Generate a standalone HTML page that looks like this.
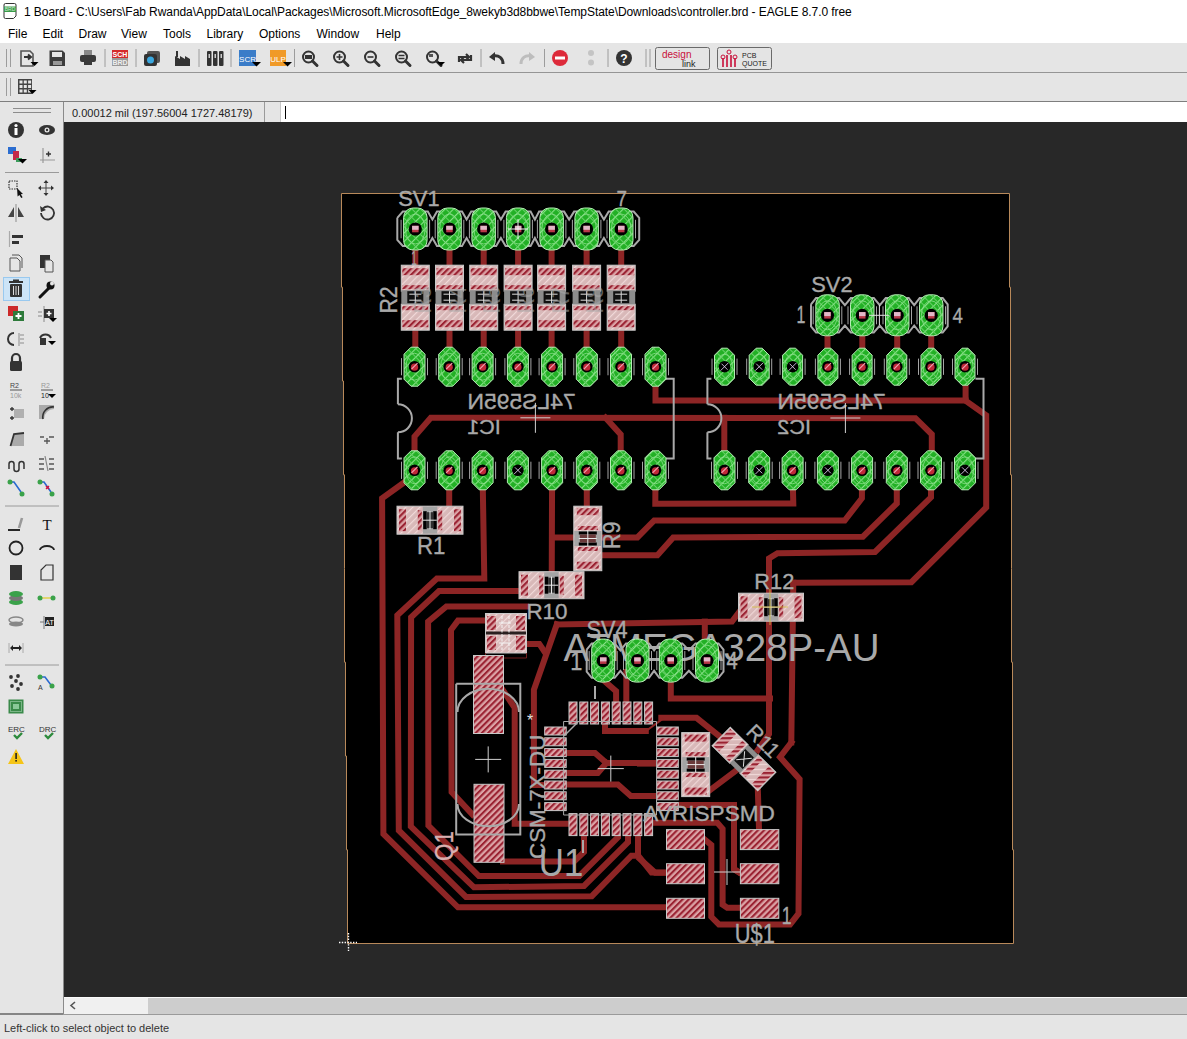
<!DOCTYPE html>
<html><head><meta charset="utf-8">
<style>
*{margin:0;padding:0;box-sizing:border-box}
html,body{width:1187px;height:1039px;overflow:hidden;background:#fff;font-family:"Liberation Sans",sans-serif;color:#000}
.a{position:absolute}
.t{position:absolute;white-space:nowrap;font-size:12px;line-height:14px}
</style></head><body>
<!-- title -->
<div class="t" style="left:24px;top:4px;font-size:12px;letter-spacing:-0.07px;color:#000;top:4.5px">1 Board - C:\Users\Fab Rwanda\AppData\Local\Packages\Microsoft.MicrosoftEdge_8wekyb3d8bbwe\TempState\Downloads\controller.brd - EAGLE 8.7.0 free</div>
<!-- menu -->
<div class="t" style="left:8px;top:27px">File</div>
<div class="t" style="left:42.5px;top:27px">Edit</div>
<div class="t" style="left:78.5px;top:27px">Draw</div>
<div class="t" style="left:121px;top:27px">View</div>
<div class="t" style="left:163px;top:27px">Tools</div>
<div class="t" style="left:206.5px;top:27px">Library</div>
<div class="t" style="left:259px;top:27px">Options</div>
<div class="t" style="left:316.5px;top:27px">Window</div>
<div class="t" style="left:376px;top:27px">Help</div>
<!-- toolbars -->
<div class="a" style="left:0;top:43px;width:1187px;height:29px;background:#e5e5e5"></div>
<div class="a" style="left:0;top:72px;width:1187px;height:1px;background:#959595"></div>
<div class="a" style="left:0;top:73px;width:1187px;height:28px;background:#e5e5e5"></div>
<div class="a" style="left:0;top:101px;width:1187px;height:1px;background:#7e7e7e"></div>
<!-- left panel -->
<div class="a" style="left:0;top:102px;width:63px;height:912px;background:#e5e5e5"></div>
<div class="a" style="left:63px;top:102px;width:1px;height:912px;background:#8a8a8a"></div>
<!-- coord bar -->
<div class="a" style="left:64px;top:102px;width:216px;height:20px;background:#e5e5e5"></div>
<div class="t" style="left:72px;top:106px;font-size:11px;color:#222">0.00012 mil (197.56004 1727.48179)</div>
<div class="a" style="left:264px;top:102px;width:1px;height:20px;background:#9a9a9a"></div>
<div class="a" style="left:280px;top:102px;width:907px;height:20px;background:#fff;border-left:1px solid #c8c8c8"></div>
<div class="a" style="left:285px;top:106px;width:1px;height:13px;background:#000"></div>
<svg width="1187" height="1039" style="position:absolute;left:0;top:0" font-family='"Liberation Sans", sans-serif'>
<defs>
 <pattern id="hatchR" patternUnits="userSpaceOnUse" width="4.4" height="4.4" patternTransform="rotate(45)">
   <rect width="4.4" height="4.4" fill="#dba2a5"/>
   <rect width="2.1" height="4.4" fill="#9a2232"/>
 </pattern>
 <pattern id="hatchP" patternUnits="userSpaceOnUse" width="5" height="5" patternTransform="rotate(45)">
   <rect width="5" height="5" fill="#d8b8b8"/>
   <rect width="1.2" height="5" fill="#f0d8d8"/>
 </pattern>
 <pattern id="hatchG" patternUnits="userSpaceOnUse" width="6" height="6" patternTransform="rotate(45)">
   <rect width="6" height="6" fill="#22b025"/>
   <rect width="1.1" height="6" fill="#88e488"/>
   <rect width="6" height="1" fill="#66d066"/>
 </pattern>
 <clipPath id="cv"><rect x="64" y="122" width="1123" height="875"/></clipPath>
</defs>
<g clip-path="url(#cv)"><rect x="64" y="122" width="1123" height="875" fill="#282828"/><polygon points="1009.5,193.5 1009.5,287.2 1010.5,287.2 1010.5,381.0 1010.5,381.0 1010.5,474.8 1011.5,474.8 1011.5,568.5 1011.5,568.5 1011.5,662.2 1012.5,662.2 1012.5,756.0 1012.5,756.0 1012.5,849.8 1013.5,849.8 1013.5,943.5 347.5,943.5 347.5,849.8 346.5,849.8 346.5,756.0 345.5,756.0 345.5,662.2 344.5,662.2 344.5,568.5 344.5,568.5 344.5,474.8 343.5,474.8 343.5,381.0 342.5,381.0 342.5,287.2 341.5,287.2 341.5,193.5" fill="#000" stroke="#b8895a" stroke-width="1"/><path d="M415.3 240.0 L415.3 270.0" fill="none" stroke="#8d2525" stroke-width="6" stroke-linejoin="miter" stroke-linecap="square"/><path d="M415.3 325.0 L415.3 356.0" fill="none" stroke="#8d2525" stroke-width="6" stroke-linejoin="miter" stroke-linecap="square"/><path d="M449.5 240.0 L449.5 270.0" fill="none" stroke="#8d2525" stroke-width="6" stroke-linejoin="miter" stroke-linecap="square"/><path d="M449.5 325.0 L449.5 356.0" fill="none" stroke="#8d2525" stroke-width="6" stroke-linejoin="miter" stroke-linecap="square"/><path d="M483.7 240.0 L483.7 270.0" fill="none" stroke="#8d2525" stroke-width="6" stroke-linejoin="miter" stroke-linecap="square"/><path d="M483.7 325.0 L483.7 356.0" fill="none" stroke="#8d2525" stroke-width="6" stroke-linejoin="miter" stroke-linecap="square"/><path d="M518.1 240.0 L518.1 270.0" fill="none" stroke="#8d2525" stroke-width="6" stroke-linejoin="miter" stroke-linecap="square"/><path d="M518.1 325.0 L518.1 356.0" fill="none" stroke="#8d2525" stroke-width="6" stroke-linejoin="miter" stroke-linecap="square"/><path d="M551.6 240.0 L551.6 270.0" fill="none" stroke="#8d2525" stroke-width="6" stroke-linejoin="miter" stroke-linecap="square"/><path d="M551.6 325.0 L551.6 356.0" fill="none" stroke="#8d2525" stroke-width="6" stroke-linejoin="miter" stroke-linecap="square"/><path d="M586.6 240.0 L586.6 270.0" fill="none" stroke="#8d2525" stroke-width="6" stroke-linejoin="miter" stroke-linecap="square"/><path d="M586.6 325.0 L586.6 356.0" fill="none" stroke="#8d2525" stroke-width="6" stroke-linejoin="miter" stroke-linecap="square"/><path d="M621.2 240.0 L621.2 270.0" fill="none" stroke="#8d2525" stroke-width="6" stroke-linejoin="miter" stroke-linecap="square"/><path d="M621.2 325.0 L621.2 356.0" fill="none" stroke="#8d2525" stroke-width="6" stroke-linejoin="miter" stroke-linecap="square"/><path d="M827.5 330.0 L827.5 352.0" fill="none" stroke="#8d2525" stroke-width="6" stroke-linejoin="miter" stroke-linecap="square"/><path d="M862.3 330.0 L862.3 352.0" fill="none" stroke="#8d2525" stroke-width="6" stroke-linejoin="miter" stroke-linecap="square"/><path d="M897.2 330.0 L897.2 352.0" fill="none" stroke="#8d2525" stroke-width="6" stroke-linejoin="miter" stroke-linecap="square"/><path d="M931.2 330.0 L931.2 352.0" fill="none" stroke="#8d2525" stroke-width="6" stroke-linejoin="miter" stroke-linecap="square"/><path d="M655.5 370.0 L655.5 400.6 L965.6 400.6" fill="none" stroke="#8d2525" stroke-width="6" stroke-linejoin="miter" stroke-linecap="square"/><path d="M965.6 370.0 L965.6 400.6 L986.2 415.2 L986.2 507.4 L911.4 582.2 L793.3 582.7" fill="none" stroke="#8d2525" stroke-width="6" stroke-linejoin="miter" stroke-linecap="square"/><path d="M414.5 460.0 L414.5 436.5 L430.8 417.8 L915.4 418.2 L931.8 434.3 L931.8 460.0" fill="none" stroke="#8d2525" stroke-width="6" stroke-linejoin="miter" stroke-linecap="square"/><path d="M605.5 417.8 L620.7 434.4 L620.7 460.0" fill="none" stroke="#8d2525" stroke-width="6" stroke-linejoin="miter" stroke-linecap="square"/><path d="M724.3 417.8 L724.3 460.0" fill="none" stroke="#8d2525" stroke-width="6" stroke-linejoin="miter" stroke-linecap="square"/><path d="M414.5 475.0 L382.1 498.4 L383.4 834.0 L458.0 907.3 L700.0 907.3" fill="none" stroke="#8d2525" stroke-width="6" stroke-linejoin="miter" stroke-linecap="square"/><path d="M449.2 475.0 L449.2 506.0" fill="none" stroke="#8d2525" stroke-width="6" stroke-linejoin="miter" stroke-linecap="square"/><path d="M482.6 475.0 L484.3 578.5 L436.9 578.5 L397.3 615.3 L398.8 830.4 L466.0 896.9 L591.8 896.2 L631.4 855.7 L638.0 855.7 L638.0 836.0" fill="none" stroke="#8d2525" stroke-width="6" stroke-linejoin="miter" stroke-linecap="square"/><path d="M638.2 855.7 L651.6 872.6 L700.0 872.6" fill="none" stroke="#8d2525" stroke-width="6" stroke-linejoin="miter" stroke-linecap="square"/><path d="M520.0 591.1 L439.0 591.1 L411.1 617.4 L410.8 826.4 L474.0 887.3 L584.0 886.0 L628.0 842.2 L628.0 830.0" fill="none" stroke="#8d2525" stroke-width="6" stroke-linejoin="miter" stroke-linecap="square"/><path d="M526.0 606.4 L446.4 606.4 L428.1 621.6 L428.4 825.6 L478.9 876.0 L579.2 876.0 L618.0 837.2 L618.0 830.0" fill="none" stroke="#8d2525" stroke-width="6" stroke-linejoin="miter" stroke-linecap="square"/><path d="M487.4 620.6 L458.0 620.6 L451.0 630.0 L451.6 792.0 L472.4 814.4" fill="none" stroke="#8d2525" stroke-width="6" stroke-linejoin="miter" stroke-linecap="square"/><path d="M552.1 475.0 L551.7 585.0" fill="none" stroke="#8d2525" stroke-width="6" stroke-linejoin="miter" stroke-linecap="square"/><path d="M552.0 537.4 L637.4 537.4 L654.2 520.5 L844.7 520.5 L861.9 498.3 L862.1 475.0" fill="none" stroke="#8d2525" stroke-width="6" stroke-linejoin="miter" stroke-linecap="square"/><path d="M601.0 555.3 L657.4 555.3 L673.2 537.4 L862.9 536.7 L896.8 503.4 L896.8 475.0" fill="none" stroke="#8d2525" stroke-width="6" stroke-linejoin="miter" stroke-linecap="square"/><path d="M586.8 475.0 L586.8 506.0" fill="none" stroke="#8d2525" stroke-width="6" stroke-linejoin="miter" stroke-linecap="square"/><path d="M655.5 475.0 L655.3 503.7 L793.3 503.4 L792.6 475.0" fill="none" stroke="#8d2525" stroke-width="6" stroke-linejoin="miter" stroke-linecap="square"/><path d="M931.0 475.0 L931.0 497.3 L875.0 551.9 L777.5 553.2 L769.0 558.5 L769.0 734.0 L757.8 750.0" fill="none" stroke="#8d2525" stroke-width="6" stroke-linejoin="miter" stroke-linecap="square"/><path d="M793.3 582.7 L791.3 742.4" fill="none" stroke="#8d2525" stroke-width="6" stroke-linejoin="miter" stroke-linecap="square"/><path d="M791.3 742.4 L780.0 757.1 L799.6 779.2 L798.5 913.7 L790.1 924.4 L718.9 924.4 L711.3 916.8 L711.3 845.0 L704.0 839.0" fill="none" stroke="#8d2525" stroke-width="6" stroke-linejoin="miter" stroke-linecap="square"/><path d="M603.2 680.0 L616.1 691.2 L616.1 705.0" fill="none" stroke="#8d2525" stroke-width="6" stroke-linejoin="miter" stroke-linecap="square"/><path d="M626.3 672.0 L626.3 705.0" fill="none" stroke="#8d2525" stroke-width="6" stroke-linejoin="miter" stroke-linecap="square"/><path d="M670.8 680.0 L670.8 698.6 L770.0 698.6" fill="none" stroke="#8d2525" stroke-width="6" stroke-linejoin="miter" stroke-linecap="square"/><path d="M557.0 624.4 L732.0 621.6 L738.5 613.0" fill="none" stroke="#8d2525" stroke-width="6" stroke-linejoin="miter" stroke-linecap="square"/><path d="M704.8 621.6 L704.8 640.0" fill="none" stroke="#8d2525" stroke-width="6" stroke-linejoin="miter" stroke-linecap="square"/><path d="M556.8 624.4 L533.9 689.7 L533.9 785.0 L546.0 785.0" fill="none" stroke="#8d2525" stroke-width="6" stroke-linejoin="miter" stroke-linecap="square"/><path d="M526.5 643.9 L539.3 643.9 L544.7 652.0" fill="none" stroke="#8d2525" stroke-width="6" stroke-linejoin="miter" stroke-linecap="square"/><path d="M502.4 689.3 L514.7 707.8 L514.7 823.7 L570.0 823.7" fill="none" stroke="#8d2525" stroke-width="6" stroke-linejoin="miter" stroke-linecap="square"/><path d="M503.0 861.6 L574.0 861.6 L584.0 852.0 L584.0 836.0" fill="none" stroke="#8d2525" stroke-width="6" stroke-linejoin="miter" stroke-linecap="square"/><path d="M566.0 753.0 L595.0 753.0 L606.4 763.0 L657.0 763.0" fill="none" stroke="#8d2525" stroke-width="6" stroke-linejoin="miter" stroke-linecap="square"/><path d="M566.0 773.0 L597.8 773.0 L606.4 763.0" fill="none" stroke="#8d2525" stroke-width="6" stroke-linejoin="miter" stroke-linecap="square"/><path d="M566.0 784.6 L617.9 784.6 L630.8 796.0 L657.0 796.0" fill="none" stroke="#8d2525" stroke-width="6" stroke-linejoin="miter" stroke-linecap="square"/><path d="M605.0 722.0 L605.0 730.9 L645.8 730.9" fill="none" stroke="#8d2525" stroke-width="6" stroke-linejoin="miter" stroke-linecap="square"/><path d="M661.3 717.8 L696.5 717.8 L721.0 737.5" fill="none" stroke="#8d2525" stroke-width="6" stroke-linejoin="miter" stroke-linecap="square"/><path d="M645 731.7 L663 718.6" stroke="#8d2525" stroke-width="2" fill="none"/><path d="M640.0 763.6 L657.0 763.6" fill="none" stroke="#8d2525" stroke-width="6" stroke-linejoin="miter" stroke-linecap="square"/><path d="M710.4 789.8 L736.6 770.2" fill="none" stroke="#8d2525" stroke-width="6" stroke-linejoin="miter" stroke-linecap="square"/><path d="M757.8 788.2 L759.0 829.0" fill="none" stroke="#8d2525" stroke-width="6" stroke-linejoin="miter" stroke-linecap="square"/><path d="M653.0 822.7 L717.3 822.7 L722.6 828.8 L722.6 904.6 L727.2 907.7 L740.0 907.7" fill="none" stroke="#8d2525" stroke-width="6" stroke-linejoin="miter" stroke-linecap="square"/><path d="M734.0 805.0 L734.0 869.0 L738.6 872.0" fill="none" stroke="#8d2525" stroke-width="6" stroke-linejoin="miter" stroke-linecap="square"/><path d="M640.0 859.0 L655.2 872.8 L666.0 872.8" fill="none" stroke="#8d2525" stroke-width="6" stroke-linejoin="miter" stroke-linecap="square"/><path d="M670.0 805.0 L734.0 805.0 L734.0 869.0 L738.6 872.0" fill="none" stroke="#8d2525" stroke-width="6" stroke-linejoin="miter" stroke-linecap="square"/><rect x="401.3" y="265.2" width="28.0" height="26.0" fill="url(#hatchP)" stroke="#c9c9c9" stroke-width="1"/><rect x="401.3" y="304.2" width="28.0" height="26.0" fill="url(#hatchP)" stroke="#c9c9c9" stroke-width="1"/><rect x="402.3" y="268.2" width="26" height="7" fill="url(#hatchR)"/><rect x="402.3" y="320.2" width="26" height="7" fill="url(#hatchR)"/><rect x="402.3" y="285.2" width="26" height="4" fill="url(#hatchR)"/><rect x="402.3" y="306.2" width="26" height="4" fill="url(#hatchR)"/><rect x="401.3" y="290.2" width="28" height="14" fill="#8c8c8c"/><rect x="407.3" y="291.2" width="16" height="12" fill="#101010"/><path d="M409.3 294.2 h12 M409.3 300.2 h12 M415.3 291.2 v12" stroke="#ddd" stroke-width="1"/><rect x="435.5" y="265.2" width="28.0" height="26.0" fill="url(#hatchP)" stroke="#c9c9c9" stroke-width="1"/><rect x="435.5" y="304.2" width="28.0" height="26.0" fill="url(#hatchP)" stroke="#c9c9c9" stroke-width="1"/><rect x="436.5" y="268.2" width="26" height="7" fill="url(#hatchR)"/><rect x="436.5" y="320.2" width="26" height="7" fill="url(#hatchR)"/><rect x="436.5" y="285.2" width="26" height="4" fill="url(#hatchR)"/><rect x="436.5" y="306.2" width="26" height="4" fill="url(#hatchR)"/><rect x="435.5" y="290.2" width="28" height="14" fill="#8c8c8c"/><rect x="441.5" y="291.2" width="16" height="12" fill="#101010"/><path d="M443.5 294.2 h12 M443.5 300.2 h12 M449.5 291.2 v12" stroke="#ddd" stroke-width="1"/><rect x="469.7" y="265.2" width="28.0" height="26.0" fill="url(#hatchP)" stroke="#c9c9c9" stroke-width="1"/><rect x="469.7" y="304.2" width="28.0" height="26.0" fill="url(#hatchP)" stroke="#c9c9c9" stroke-width="1"/><rect x="470.7" y="268.2" width="26" height="7" fill="url(#hatchR)"/><rect x="470.7" y="320.2" width="26" height="7" fill="url(#hatchR)"/><rect x="470.7" y="285.2" width="26" height="4" fill="url(#hatchR)"/><rect x="470.7" y="306.2" width="26" height="4" fill="url(#hatchR)"/><rect x="469.7" y="290.2" width="28" height="14" fill="#8c8c8c"/><rect x="475.7" y="291.2" width="16" height="12" fill="#101010"/><path d="M477.7 294.2 h12 M477.7 300.2 h12 M483.7 291.2 v12" stroke="#ddd" stroke-width="1"/><rect x="504.1" y="265.2" width="28.0" height="26.0" fill="url(#hatchP)" stroke="#c9c9c9" stroke-width="1"/><rect x="504.1" y="304.2" width="28.0" height="26.0" fill="url(#hatchP)" stroke="#c9c9c9" stroke-width="1"/><rect x="505.1" y="268.2" width="26" height="7" fill="url(#hatchR)"/><rect x="505.1" y="320.2" width="26" height="7" fill="url(#hatchR)"/><rect x="505.1" y="285.2" width="26" height="4" fill="url(#hatchR)"/><rect x="505.1" y="306.2" width="26" height="4" fill="url(#hatchR)"/><rect x="504.1" y="290.2" width="28" height="14" fill="#8c8c8c"/><rect x="510.1" y="291.2" width="16" height="12" fill="#101010"/><path d="M512.1 294.2 h12 M512.1 300.2 h12 M518.1 291.2 v12" stroke="#ddd" stroke-width="1"/><rect x="537.6" y="265.2" width="28.0" height="26.0" fill="url(#hatchP)" stroke="#c9c9c9" stroke-width="1"/><rect x="537.6" y="304.2" width="28.0" height="26.0" fill="url(#hatchP)" stroke="#c9c9c9" stroke-width="1"/><rect x="538.6" y="268.2" width="26" height="7" fill="url(#hatchR)"/><rect x="538.6" y="320.2" width="26" height="7" fill="url(#hatchR)"/><rect x="538.6" y="285.2" width="26" height="4" fill="url(#hatchR)"/><rect x="538.6" y="306.2" width="26" height="4" fill="url(#hatchR)"/><rect x="537.6" y="290.2" width="28" height="14" fill="#8c8c8c"/><rect x="543.6" y="291.2" width="16" height="12" fill="#101010"/><path d="M545.6 294.2 h12 M545.6 300.2 h12 M551.6 291.2 v12" stroke="#ddd" stroke-width="1"/><rect x="572.6" y="265.2" width="28.0" height="26.0" fill="url(#hatchP)" stroke="#c9c9c9" stroke-width="1"/><rect x="572.6" y="304.2" width="28.0" height="26.0" fill="url(#hatchP)" stroke="#c9c9c9" stroke-width="1"/><rect x="573.6" y="268.2" width="26" height="7" fill="url(#hatchR)"/><rect x="573.6" y="320.2" width="26" height="7" fill="url(#hatchR)"/><rect x="573.6" y="285.2" width="26" height="4" fill="url(#hatchR)"/><rect x="573.6" y="306.2" width="26" height="4" fill="url(#hatchR)"/><rect x="572.6" y="290.2" width="28" height="14" fill="#8c8c8c"/><rect x="578.6" y="291.2" width="16" height="12" fill="#101010"/><path d="M580.6 294.2 h12 M580.6 300.2 h12 M586.6 291.2 v12" stroke="#ddd" stroke-width="1"/><rect x="607.2" y="265.2" width="28.0" height="26.0" fill="url(#hatchP)" stroke="#c9c9c9" stroke-width="1"/><rect x="607.2" y="304.2" width="28.0" height="26.0" fill="url(#hatchP)" stroke="#c9c9c9" stroke-width="1"/><rect x="608.2" y="268.2" width="26" height="7" fill="url(#hatchR)"/><rect x="608.2" y="320.2" width="26" height="7" fill="url(#hatchR)"/><rect x="608.2" y="285.2" width="26" height="4" fill="url(#hatchR)"/><rect x="608.2" y="306.2" width="26" height="4" fill="url(#hatchR)"/><rect x="607.2" y="290.2" width="28" height="14" fill="#8c8c8c"/><rect x="613.2" y="291.2" width="16" height="12" fill="#101010"/><path d="M615.2 294.2 h12 M615.2 300.2 h12 M621.2 291.2 v12" stroke="#ddd" stroke-width="1"/><rect x="397.0" y="506.2" width="66.0" height="28.0" fill="url(#hatchP)" stroke="#c9c9c9" stroke-width="1"/><rect x="399.0" y="509.2" width="7" height="22.0" fill="url(#hatchR)"/><rect x="454.0" y="509.2" width="7" height="22.0" fill="url(#hatchR)"/><rect x="417.8" y="510.2" width="4" height="20.0" fill="url(#hatchR)"/><rect x="438.2" y="510.2" width="4" height="20.0" fill="url(#hatchR)"/><rect x="422.8" y="506.7" width="14.5" height="27.0" fill="#a4a4a4"/><rect x="423.2" y="511.2" width="3.5" height="18.0" fill="#000"/><rect x="433.2" y="511.2" width="3.5" height="18.0" fill="#000"/><rect x="426.8" y="512.2" width="6.5" height="16.0" fill="#303030"/><path d="M422.8 520.2 h14 M430.0 511.2 v18.0" stroke="#e8e8e8" stroke-width="1"/><rect x="573.8" y="506.2" width="28.0" height="64.5" fill="url(#hatchP)" stroke="#c9c9c9" stroke-width="1"/><rect x="576.8" y="508.2" width="22.0" height="7" fill="url(#hatchR)"/><rect x="576.8" y="561.7" width="22.0" height="7" fill="url(#hatchR)"/><rect x="577.8" y="526.0" width="20.0" height="4" fill="url(#hatchR)"/><rect x="577.8" y="547.0" width="20.0" height="4" fill="url(#hatchR)"/><rect x="574.3" y="531.0" width="27.0" height="15" fill="#a4a4a4"/><rect x="578.8" y="531.5" width="18.0" height="3" fill="#000"/><rect x="578.8" y="542.5" width="18.0" height="3" fill="#000"/><rect x="579.8" y="534.5" width="16.0" height="8" fill="#6a3a3a"/><path d="M587.8 531.0 v15 M578.8 538.5 h18.0" stroke="#e8e8e8" stroke-width="1"/><rect x="519.0" y="571.7" width="65.0" height="27.0" fill="url(#hatchP)" stroke="#c9c9c9" stroke-width="1"/><rect x="521.0" y="574.7" width="7" height="21.0" fill="url(#hatchR)"/><rect x="575.0" y="574.7" width="7" height="21.0" fill="url(#hatchR)"/><rect x="539.2" y="575.7" width="4" height="19.0" fill="url(#hatchR)"/><rect x="559.8" y="575.7" width="4" height="19.0" fill="url(#hatchR)"/><rect x="544.2" y="572.2" width="14.5" height="26.0" fill="#a4a4a4"/><rect x="544.8" y="576.7" width="3.5" height="17.0" fill="#000"/><rect x="554.8" y="576.7" width="3.5" height="17.0" fill="#000"/><rect x="548.2" y="577.7" width="6.5" height="15.0" fill="#303030"/><path d="M544.2 585.2 h14 M551.5 576.7 v17.0" stroke="#e8e8e8" stroke-width="1"/><rect x="738.5" y="593.2" width="65.0" height="28.0" fill="url(#hatchP)" stroke="#c9c9c9" stroke-width="1"/><rect x="740.5" y="596.2" width="7" height="22.0" fill="url(#hatchR)"/><rect x="794.5" y="596.2" width="7" height="22.0" fill="url(#hatchR)"/><rect x="758.8" y="597.2" width="4" height="20.0" fill="url(#hatchR)"/><rect x="779.2" y="597.2" width="4" height="20.0" fill="url(#hatchR)"/><rect x="763.8" y="593.7" width="14.5" height="27.0" fill="#a4a4a4"/><rect x="764.2" y="598.2" width="3.5" height="18.0" fill="#000"/><rect x="774.2" y="598.2" width="3.5" height="18.0" fill="#000"/><rect x="767.8" y="599.2" width="6.5" height="16.0" fill="#303030"/><path d="M763.8 607.2 h14 M771.0 598.2 v18.0" stroke="#e8e8e8" stroke-width="1"/><rect x="681.7" y="732.6" width="28.0" height="64.0" fill="url(#hatchP)" stroke="#c9c9c9" stroke-width="1"/><rect x="684.7" y="734.6" width="22.0" height="7" fill="url(#hatchR)"/><rect x="684.7" y="787.6" width="22.0" height="7" fill="url(#hatchR)"/><rect x="685.7" y="752.1" width="20.0" height="4" fill="url(#hatchR)"/><rect x="685.7" y="773.1" width="20.0" height="4" fill="url(#hatchR)"/><rect x="682.2" y="757.1" width="27.0" height="15" fill="#a4a4a4"/><rect x="686.7" y="757.6" width="18.0" height="3" fill="#000"/><rect x="686.7" y="768.6" width="18.0" height="3" fill="#000"/><rect x="687.7" y="760.6" width="16.0" height="8" fill="#6a3a3a"/><path d="M695.7 757.1 v15 M686.7 764.6 h18.0" stroke="#e8e8e8" stroke-width="1"/><rect x="485.5" y="613.5" width="41.0" height="39.5" fill="url(#hatchP)" stroke="#c9c9c9" stroke-width="1"/><rect x="487" y="616" width="9" height="14" fill="url(#hatchR)"/><rect x="516" y="616" width="9" height="14" fill="url(#hatchR)"/><rect x="487" y="636" width="9" height="14" fill="url(#hatchR)"/><rect x="516" y="636" width="9" height="14" fill="url(#hatchR)"/><rect x="486" y="631.5" width="40" height="3" fill="#2a2020"/><path d="M502 616 v34 M509 616 v34" stroke="#f4f4f4" stroke-width="1" stroke-dasharray="3 1.5"/><path d="M499 623 h12 M499 643 h12" stroke="#f4f4f4" stroke-width="1"/><path d="M485.5 653 v5 h41 v-5" fill="none" stroke="#8d2525" stroke-width="0.8"/><g transform="translate(744 759) rotate(44.5)"><rect x="-32" y="-13" width="25" height="26" fill="url(#hatchP)" stroke="#c9c9c9"/><rect x="7" y="-13" width="25" height="26" fill="url(#hatchP)" stroke="#c9c9c9"/><rect x="-31" y="-12" width="8" height="24" fill="url(#hatchR)"/><rect x="23" y="-12" width="8" height="24" fill="url(#hatchR)"/><rect x="-14" y="-12" width="5" height="24" fill="url(#hatchR)"/><rect x="9" y="-12" width="5" height="24" fill="url(#hatchR)"/><rect x="-7" y="-13" width="14" height="26" fill="#8c8c8c"/><rect x="-6" y="-8" width="12" height="16" fill="#101010"/><path d="M-5 -6 L5 6 M5 -6 L-5 6" stroke="#ddd" stroke-width="1"/></g><rect x="473.5" y="655.5" width="30.0" height="78.0" fill="url(#hatchR)" stroke="#c9c9c9" stroke-width="1"/><rect x="474.0" y="784.3" width="30.0" height="78.0" fill="url(#hatchR)" stroke="#c9c9c9" stroke-width="1"/><rect x="569.0" y="702.0" width="8.0" height="22.0" fill="url(#hatchR)" stroke="#c9c9c9" stroke-width="1"/><rect x="569.0" y="813.6" width="8.0" height="22.0" fill="url(#hatchR)" stroke="#c9c9c9" stroke-width="1"/><rect x="544.7" y="727.0" width="21.5" height="8.0" fill="url(#hatchR)" stroke="#c9c9c9" stroke-width="1"/><rect x="656.8" y="727.0" width="21.5" height="8.0" fill="url(#hatchR)" stroke="#c9c9c9" stroke-width="1"/><rect x="579.8" y="702.0" width="8.0" height="22.0" fill="url(#hatchR)" stroke="#c9c9c9" stroke-width="1"/><rect x="579.8" y="813.6" width="8.0" height="22.0" fill="url(#hatchR)" stroke="#c9c9c9" stroke-width="1"/><rect x="544.7" y="737.8" width="21.5" height="8.0" fill="url(#hatchR)" stroke="#c9c9c9" stroke-width="1"/><rect x="656.8" y="737.8" width="21.5" height="8.0" fill="url(#hatchR)" stroke="#c9c9c9" stroke-width="1"/><rect x="590.6" y="702.0" width="8.0" height="22.0" fill="url(#hatchR)" stroke="#c9c9c9" stroke-width="1"/><rect x="590.6" y="813.6" width="8.0" height="22.0" fill="url(#hatchR)" stroke="#c9c9c9" stroke-width="1"/><rect x="544.7" y="748.6" width="21.5" height="8.0" fill="url(#hatchR)" stroke="#c9c9c9" stroke-width="1"/><rect x="656.8" y="748.6" width="21.5" height="8.0" fill="url(#hatchR)" stroke="#c9c9c9" stroke-width="1"/><rect x="601.4" y="702.0" width="8.0" height="22.0" fill="url(#hatchR)" stroke="#c9c9c9" stroke-width="1"/><rect x="601.4" y="813.6" width="8.0" height="22.0" fill="url(#hatchR)" stroke="#c9c9c9" stroke-width="1"/><rect x="544.7" y="759.4" width="21.5" height="8.0" fill="url(#hatchR)" stroke="#c9c9c9" stroke-width="1"/><rect x="656.8" y="759.4" width="21.5" height="8.0" fill="url(#hatchR)" stroke="#c9c9c9" stroke-width="1"/><rect x="612.2" y="702.0" width="8.0" height="22.0" fill="url(#hatchR)" stroke="#c9c9c9" stroke-width="1"/><rect x="612.2" y="813.6" width="8.0" height="22.0" fill="url(#hatchR)" stroke="#c9c9c9" stroke-width="1"/><rect x="544.7" y="770.2" width="21.5" height="8.0" fill="url(#hatchR)" stroke="#c9c9c9" stroke-width="1"/><rect x="656.8" y="770.2" width="21.5" height="8.0" fill="url(#hatchR)" stroke="#c9c9c9" stroke-width="1"/><rect x="623.0" y="702.0" width="8.0" height="22.0" fill="url(#hatchR)" stroke="#c9c9c9" stroke-width="1"/><rect x="623.0" y="813.6" width="8.0" height="22.0" fill="url(#hatchR)" stroke="#c9c9c9" stroke-width="1"/><rect x="544.7" y="781.0" width="21.5" height="8.0" fill="url(#hatchR)" stroke="#c9c9c9" stroke-width="1"/><rect x="656.8" y="781.0" width="21.5" height="8.0" fill="url(#hatchR)" stroke="#c9c9c9" stroke-width="1"/><rect x="633.8" y="702.0" width="8.0" height="22.0" fill="url(#hatchR)" stroke="#c9c9c9" stroke-width="1"/><rect x="633.8" y="813.6" width="8.0" height="22.0" fill="url(#hatchR)" stroke="#c9c9c9" stroke-width="1"/><rect x="544.7" y="791.8" width="21.5" height="8.0" fill="url(#hatchR)" stroke="#c9c9c9" stroke-width="1"/><rect x="656.8" y="791.8" width="21.5" height="8.0" fill="url(#hatchR)" stroke="#c9c9c9" stroke-width="1"/><rect x="644.6" y="702.0" width="8.0" height="22.0" fill="url(#hatchR)" stroke="#c9c9c9" stroke-width="1"/><rect x="644.6" y="813.6" width="8.0" height="22.0" fill="url(#hatchR)" stroke="#c9c9c9" stroke-width="1"/><rect x="544.7" y="802.6" width="21.5" height="8.0" fill="url(#hatchR)" stroke="#c9c9c9" stroke-width="1"/><rect x="656.8" y="802.6" width="21.5" height="8.0" fill="url(#hatchR)" stroke="#c9c9c9" stroke-width="1"/><rect x="666.5" y="829.6" width="38.0" height="20.0" fill="url(#hatchR)" stroke="#c9c9c9" stroke-width="1"/><rect x="740.4" y="829.6" width="38.4" height="20.0" fill="url(#hatchR)" stroke="#c9c9c9" stroke-width="1"/><rect x="666.5" y="863.7" width="38.0" height="20.0" fill="url(#hatchR)" stroke="#c9c9c9" stroke-width="1"/><rect x="740.4" y="863.7" width="38.4" height="20.0" fill="url(#hatchR)" stroke="#c9c9c9" stroke-width="1"/><rect x="666.5" y="898.3" width="38.0" height="20.0" fill="url(#hatchR)" stroke="#c9c9c9" stroke-width="1"/><rect x="740.4" y="898.3" width="38.4" height="20.0" fill="url(#hatchR)" stroke="#c9c9c9" stroke-width="1"/><path d="M397.3 217.8 L402.8 211.6 L427.8 211.6 L432.4 219.6 L437.0 211.6 L462.0 211.6 L466.6 219.6 L471.2 211.6 L496.2 211.6 L500.9 219.6 L505.6 211.6 L530.6 211.6 L534.9 219.6 L539.1 211.6 L564.1 211.6 L569.1 219.6 L574.1 211.6 L599.1 211.6 L603.9 219.6 L608.7 211.6 L633.7 211.6 L639.2 217.8 L639.2 239.8 L633.7 246.0 L608.7 246.0 L603.9 238.0 L599.1 246.0 L574.1 246.0 L569.1 238.0 L564.1 246.0 L539.1 246.0 L534.9 238.0 L530.6 246.0 L505.6 246.0 L500.9 238.0 L496.2 246.0 L471.2 246.0 L466.6 238.0 L462.0 246.0 L437.0 246.0 L432.4 238.0 L427.8 246.0 L402.8 246.0 L397.3 239.8 L397.3 217.8" fill="none" stroke="#a9a9a9" stroke-width="2"/><path d="M811.0 304.3 L816.0 298.1 L839.0 298.1 L844.9 305.1 L850.8 298.1 L873.8 298.1 L879.8 305.1 L885.7 298.1 L908.7 298.1 L914.2 305.1 L919.7 298.1 L942.7 298.1 L947.7 304.3 L947.7 326.3 L942.7 332.5 L919.7 332.5 L914.2 325.5 L908.7 332.5 L885.7 332.5 L879.8 325.5 L873.8 332.5 L850.8 332.5 L844.9 325.5 L839.0 332.5 L816.0 332.5 L811.0 326.3 L811.0 304.3" fill="none" stroke="#a9a9a9" stroke-width="2"/><path d="M586.7 649.6 L591.7 643.4 L614.7 643.4 L620.4 650.4 L626.0 643.4 L649.0 643.4 L654.1 650.4 L659.3 643.4 L682.3 643.4 L688.9 650.4 L695.5 643.4 L718.5 643.4 L723.5 649.6 L723.5 671.6 L718.5 677.8 L695.5 677.8 L688.9 670.8 L682.3 677.8 L659.3 677.8 L654.1 670.8 L649.0 677.8 L626.0 677.8 L620.4 670.8 L614.7 677.8 L591.7 677.8 L586.7 671.6 L586.7 649.6" fill="none" stroke="#a9a9a9" stroke-width="2"/><path d="M401.9 378.8 L397.9 378.8 L397.9 404.3" fill="none" stroke="#a9a9a9" stroke-width="2"/><path d="M397.9 404.3 A 14.0 14.0 0 0 1 397.9 432.3" fill="none" stroke="#a9a9a9" stroke-width="2"/><path d="M397.9 432.3 L397.9 458.5 L401.9 458.5" fill="none" stroke="#a9a9a9" stroke-width="2"/><path d="M665.7 378.8 L673.7 378.8 L673.7 458.5 L665.7 458.5" fill="none" stroke="#a9a9a9" stroke-width="2"/><path d="M711.4 378.8 L707.4 378.8 L707.4 404.3" fill="none" stroke="#a9a9a9" stroke-width="2"/><path d="M707.4 404.3 A 14.0 14.0 0 0 1 707.4 432.3" fill="none" stroke="#a9a9a9" stroke-width="2"/><path d="M707.4 432.3 L707.4 458.5 L711.4 458.5" fill="none" stroke="#a9a9a9" stroke-width="2"/><path d="M975.5 378.8 L983.5 378.8 L983.5 458.5 L975.5 458.5" fill="none" stroke="#a9a9a9" stroke-width="2"/><path d="M456.2 683.7 L520.3 683.7 L520.3 834.5 L456.2 834.5 L456.2 683.7" fill="none" stroke="#a9a9a9" stroke-width="2"/><path d="M457.5 712 A 30.5 23 0 0 1 519 712" fill="none" stroke="#a9a9a9" stroke-width="2"/><path d="M457.5 804 A 30.5 22 0 0 0 519 804" fill="none" stroke="#a9a9a9" stroke-width="2"/><path d="M563.6 721.5 L656.5 721.5 L656.5 815.0 L563.6 815.0 L563.6 721.5" fill="none" stroke="#a9a9a9" stroke-width="1"/><path d="M564.0 736.0 L578.0 722.0" fill="none" stroke="#a9a9a9" stroke-width="1.5"/><path d="M595.0 686.0 L595.0 699.0" fill="none" stroke="#a9a9a9" stroke-width="2"/><path d="M583.0 840.0 L583.0 853.0" fill="none" stroke="#a9a9a9" stroke-width="2"/><text x="0" y="0" font-size="38.14" fill="#a9a9a9" transform="translate(563.60 660.52) scale(1.0098 1)">ATMEGA328P-AU</text><text x="0" y="0" font-size="38.68" fill="#a9a9a9" transform="translate(538.80 876.41) scale(0.9022 1)">U1</text><text x="0" y="0" font-size="22.03" fill="#a9a9a9" stroke="#a9a9a9" stroke-width="0.35" transform="translate(643.30 820.78) scale(1.0277 1)">AVRISPSMD</text><text x="0" y="0" font-size="21.61" fill="#a9a9a9" stroke="#a9a9a9" stroke-width="0.35" transform="translate(575.70 409.28) scale(-1.0614 1)">74LS595N</text><text x="0" y="0" font-size="19.63" fill="#a9a9a9" stroke="#a9a9a9" stroke-width="0.35" transform="translate(500.70 434.30) scale(-1.0933 1)">IC1</text><text x="0" y="0" font-size="21.61" fill="#a9a9a9" stroke="#a9a9a9" stroke-width="0.35" transform="translate(885.70 409.28) scale(-1.0614 1)">74LS595N</text><text x="0" y="0" font-size="19.63" fill="#a9a9a9" stroke="#a9a9a9" stroke-width="0.35" transform="translate(811.00 434.30) scale(-1.1032 1)">IC2</text><path d="M401.1 219.8 v18.5 M429.6 219.8 v18.5" stroke="#b8b8b8" stroke-width="0.9"/><rect x="403.6" y="208.0" width="23.5" height="42.0" rx="9.5" fill="url(#hatchG)" stroke="#b4eeb4" stroke-width="1"/><ellipse cx="415.3" cy="229.0" rx="9.8" ry="15.0" fill="none" stroke="#8ee08e" stroke-width="0.8"/><circle cx="415.3" cy="229.0" r="6.6" fill="#000"/><rect x="412.1" y="225.8" width="6.5" height="6.5" fill="#b83848"/><rect x="412.1" y="225.8" width="6.5" height="4.0" fill="#e0b8c8"/><path d="M435.2 219.8 v18.5 M463.8 219.8 v18.5" stroke="#b8b8b8" stroke-width="0.9"/><rect x="437.8" y="208.0" width="23.5" height="42.0" rx="9.5" fill="url(#hatchG)" stroke="#b4eeb4" stroke-width="1"/><ellipse cx="449.5" cy="229.0" rx="9.8" ry="15.0" fill="none" stroke="#8ee08e" stroke-width="0.8"/><circle cx="449.5" cy="229.0" r="6.6" fill="#000"/><rect x="446.2" y="225.8" width="6.5" height="6.5" fill="#b83848"/><rect x="446.2" y="225.8" width="6.5" height="4.0" fill="#e0b8c8"/><path d="M469.4 219.8 v18.5 M497.9 219.8 v18.5" stroke="#b8b8b8" stroke-width="0.9"/><rect x="471.9" y="208.0" width="23.5" height="42.0" rx="9.5" fill="url(#hatchG)" stroke="#b4eeb4" stroke-width="1"/><ellipse cx="483.7" cy="229.0" rx="9.8" ry="15.0" fill="none" stroke="#8ee08e" stroke-width="0.8"/><circle cx="483.7" cy="229.0" r="6.6" fill="#000"/><rect x="480.4" y="225.8" width="6.5" height="6.5" fill="#b83848"/><rect x="480.4" y="225.8" width="6.5" height="4.0" fill="#e0b8c8"/><path d="M503.9 219.8 v18.5 M532.4 219.8 v18.5" stroke="#b8b8b8" stroke-width="0.9"/><rect x="506.4" y="208.0" width="23.5" height="42.0" rx="9.5" fill="url(#hatchG)" stroke="#b4eeb4" stroke-width="1"/><ellipse cx="518.1" cy="229.0" rx="9.8" ry="15.0" fill="none" stroke="#8ee08e" stroke-width="0.8"/><circle cx="518.1" cy="229.0" r="6.6" fill="#000"/><rect x="514.9" y="225.8" width="6.5" height="6.5" fill="#b83848"/><rect x="514.9" y="225.8" width="6.5" height="4.0" fill="#e0b8c8"/><path d="M537.4 219.8 v18.5 M565.9 219.8 v18.5" stroke="#b8b8b8" stroke-width="0.9"/><rect x="539.9" y="208.0" width="23.5" height="42.0" rx="9.5" fill="url(#hatchG)" stroke="#b4eeb4" stroke-width="1"/><ellipse cx="551.6" cy="229.0" rx="9.8" ry="15.0" fill="none" stroke="#8ee08e" stroke-width="0.8"/><circle cx="551.6" cy="229.0" r="6.6" fill="#000"/><rect x="548.4" y="225.8" width="6.5" height="6.5" fill="#b83848"/><rect x="548.4" y="225.8" width="6.5" height="4.0" fill="#e0b8c8"/><path d="M572.4 219.8 v18.5 M600.9 219.8 v18.5" stroke="#b8b8b8" stroke-width="0.9"/><rect x="574.9" y="208.0" width="23.5" height="42.0" rx="9.5" fill="url(#hatchG)" stroke="#b4eeb4" stroke-width="1"/><ellipse cx="586.6" cy="229.0" rx="9.8" ry="15.0" fill="none" stroke="#8ee08e" stroke-width="0.8"/><circle cx="586.6" cy="229.0" r="6.6" fill="#000"/><rect x="583.4" y="225.8" width="6.5" height="6.5" fill="#b83848"/><rect x="583.4" y="225.8" width="6.5" height="4.0" fill="#e0b8c8"/><path d="M607.0 219.8 v18.5 M635.5 219.8 v18.5" stroke="#b8b8b8" stroke-width="0.9"/><rect x="609.5" y="208.0" width="23.5" height="42.0" rx="9.5" fill="url(#hatchG)" stroke="#b4eeb4" stroke-width="1"/><ellipse cx="621.2" cy="229.0" rx="9.8" ry="15.0" fill="none" stroke="#8ee08e" stroke-width="0.8"/><circle cx="621.2" cy="229.0" r="6.6" fill="#000"/><rect x="618.0" y="225.8" width="6.5" height="6.5" fill="#b83848"/><rect x="618.0" y="225.8" width="6.5" height="4.0" fill="#e0b8c8"/><path d="M401.5 358.1 v17.2 M427.5 358.1 v17.2" stroke="#b8b8b8" stroke-width="0.9"/><path d="M411.0 347.2 L418.0 347.2 L425.0 354.2 L425.0 379.2 L418.0 386.2 L411.0 386.2 L404.0 379.2 L404.0 354.2Z" fill="url(#hatchG)" stroke="#b4eeb4" stroke-width="1"/><ellipse cx="414.5" cy="366.7" rx="8.5" ry="13.5" fill="none" stroke="#8ee08e" stroke-width="0.8"/><circle cx="414.5" cy="366.7" r="5.8" fill="#000"/><circle cx="414.5" cy="367.2" r="3.6" fill="#c02838"/><path d="M411.5 369.2 l6 -6" stroke="#f0a0b0" stroke-width="1.2"/><path d="M401.5 461.7 v17.2 M427.5 461.7 v17.2" stroke="#b8b8b8" stroke-width="0.9"/><path d="M411.0 450.8 L418.0 450.8 L425.0 457.8 L425.0 482.8 L418.0 489.8 L411.0 489.8 L404.0 482.8 L404.0 457.8Z" fill="url(#hatchG)" stroke="#b4eeb4" stroke-width="1"/><ellipse cx="414.5" cy="470.3" rx="8.5" ry="13.5" fill="none" stroke="#8ee08e" stroke-width="0.8"/><circle cx="414.5" cy="470.3" r="5.8" fill="#000"/><circle cx="414.5" cy="470.8" r="3.6" fill="#c02838"/><path d="M411.5 472.8 l6 -6" stroke="#f0a0b0" stroke-width="1.2"/><path d="M436.2 358.1 v17.2 M462.2 358.1 v17.2" stroke="#b8b8b8" stroke-width="0.9"/><path d="M445.7 347.2 L452.7 347.2 L459.7 354.2 L459.7 379.2 L452.7 386.2 L445.7 386.2 L438.7 379.2 L438.7 354.2Z" fill="url(#hatchG)" stroke="#b4eeb4" stroke-width="1"/><ellipse cx="449.2" cy="366.7" rx="8.5" ry="13.5" fill="none" stroke="#8ee08e" stroke-width="0.8"/><circle cx="449.2" cy="366.7" r="5.8" fill="#000"/><circle cx="449.2" cy="367.2" r="3.6" fill="#c02838"/><path d="M446.2 369.2 l6 -6" stroke="#f0a0b0" stroke-width="1.2"/><path d="M436.2 461.7 v17.2 M462.2 461.7 v17.2" stroke="#b8b8b8" stroke-width="0.9"/><path d="M445.7 450.8 L452.7 450.8 L459.7 457.8 L459.7 482.8 L452.7 489.8 L445.7 489.8 L438.7 482.8 L438.7 457.8Z" fill="url(#hatchG)" stroke="#b4eeb4" stroke-width="1"/><ellipse cx="449.2" cy="470.3" rx="8.5" ry="13.5" fill="none" stroke="#8ee08e" stroke-width="0.8"/><circle cx="449.2" cy="470.3" r="5.8" fill="#000"/><circle cx="449.2" cy="470.8" r="3.6" fill="#c02838"/><path d="M446.2 472.8 l6 -6" stroke="#f0a0b0" stroke-width="1.2"/><path d="M469.6 358.1 v17.2 M495.6 358.1 v17.2" stroke="#b8b8b8" stroke-width="0.9"/><path d="M479.1 347.2 L486.1 347.2 L493.1 354.2 L493.1 379.2 L486.1 386.2 L479.1 386.2 L472.1 379.2 L472.1 354.2Z" fill="url(#hatchG)" stroke="#b4eeb4" stroke-width="1"/><ellipse cx="482.6" cy="366.7" rx="8.5" ry="13.5" fill="none" stroke="#8ee08e" stroke-width="0.8"/><circle cx="482.6" cy="366.7" r="5.8" fill="#000"/><circle cx="482.6" cy="367.2" r="3.6" fill="#c02838"/><path d="M479.6 369.2 l6 -6" stroke="#f0a0b0" stroke-width="1.2"/><path d="M469.6 461.7 v17.2 M495.6 461.7 v17.2" stroke="#b8b8b8" stroke-width="0.9"/><path d="M479.1 450.8 L486.1 450.8 L493.1 457.8 L493.1 482.8 L486.1 489.8 L479.1 489.8 L472.1 482.8 L472.1 457.8Z" fill="url(#hatchG)" stroke="#b4eeb4" stroke-width="1"/><ellipse cx="482.6" cy="470.3" rx="8.5" ry="13.5" fill="none" stroke="#8ee08e" stroke-width="0.8"/><circle cx="482.6" cy="470.3" r="5.8" fill="#000"/><circle cx="482.6" cy="470.8" r="3.6" fill="#c02838"/><path d="M479.6 472.8 l6 -6" stroke="#f0a0b0" stroke-width="1.2"/><path d="M504.9 358.1 v17.2 M530.9 358.1 v17.2" stroke="#b8b8b8" stroke-width="0.9"/><path d="M514.4 347.2 L521.4 347.2 L528.4 354.2 L528.4 379.2 L521.4 386.2 L514.4 386.2 L507.4 379.2 L507.4 354.2Z" fill="url(#hatchG)" stroke="#b4eeb4" stroke-width="1"/><ellipse cx="517.9" cy="366.7" rx="8.5" ry="13.5" fill="none" stroke="#8ee08e" stroke-width="0.8"/><circle cx="517.9" cy="366.7" r="5.8" fill="#000"/><circle cx="517.9" cy="367.2" r="3.6" fill="#c02838"/><path d="M514.9 369.2 l6 -6" stroke="#f0a0b0" stroke-width="1.2"/><path d="M504.9 461.7 v17.2 M530.9 461.7 v17.2" stroke="#b8b8b8" stroke-width="0.9"/><path d="M514.4 450.8 L521.4 450.8 L528.4 457.8 L528.4 482.8 L521.4 489.8 L514.4 489.8 L507.4 482.8 L507.4 457.8Z" fill="url(#hatchG)" stroke="#b4eeb4" stroke-width="1"/><ellipse cx="517.9" cy="470.3" rx="8.5" ry="13.5" fill="none" stroke="#8ee08e" stroke-width="0.8"/><circle cx="517.9" cy="470.3" r="5.8" fill="#000"/><path d="M513.9 474.3 l8 -8 M514.9 467.3 l6 6" stroke="#d8c8e8" stroke-width="0.9"/><path d="M539.1 358.1 v17.2 M565.1 358.1 v17.2" stroke="#b8b8b8" stroke-width="0.9"/><path d="M548.6 347.2 L555.6 347.2 L562.6 354.2 L562.6 379.2 L555.6 386.2 L548.6 386.2 L541.6 379.2 L541.6 354.2Z" fill="url(#hatchG)" stroke="#b4eeb4" stroke-width="1"/><ellipse cx="552.1" cy="366.7" rx="8.5" ry="13.5" fill="none" stroke="#8ee08e" stroke-width="0.8"/><circle cx="552.1" cy="366.7" r="5.8" fill="#000"/><circle cx="552.1" cy="367.2" r="3.6" fill="#c02838"/><path d="M549.1 369.2 l6 -6" stroke="#f0a0b0" stroke-width="1.2"/><path d="M539.1 461.7 v17.2 M565.1 461.7 v17.2" stroke="#b8b8b8" stroke-width="0.9"/><path d="M548.6 450.8 L555.6 450.8 L562.6 457.8 L562.6 482.8 L555.6 489.8 L548.6 489.8 L541.6 482.8 L541.6 457.8Z" fill="url(#hatchG)" stroke="#b4eeb4" stroke-width="1"/><ellipse cx="552.1" cy="470.3" rx="8.5" ry="13.5" fill="none" stroke="#8ee08e" stroke-width="0.8"/><circle cx="552.1" cy="470.3" r="5.8" fill="#000"/><circle cx="552.1" cy="470.8" r="3.6" fill="#c02838"/><path d="M549.1 472.8 l6 -6" stroke="#f0a0b0" stroke-width="1.2"/><path d="M573.8 358.1 v17.2 M599.8 358.1 v17.2" stroke="#b8b8b8" stroke-width="0.9"/><path d="M583.3 347.2 L590.3 347.2 L597.3 354.2 L597.3 379.2 L590.3 386.2 L583.3 386.2 L576.3 379.2 L576.3 354.2Z" fill="url(#hatchG)" stroke="#b4eeb4" stroke-width="1"/><ellipse cx="586.8" cy="366.7" rx="8.5" ry="13.5" fill="none" stroke="#8ee08e" stroke-width="0.8"/><circle cx="586.8" cy="366.7" r="5.8" fill="#000"/><circle cx="586.8" cy="367.2" r="3.6" fill="#c02838"/><path d="M583.8 369.2 l6 -6" stroke="#f0a0b0" stroke-width="1.2"/><path d="M573.8 461.7 v17.2 M599.8 461.7 v17.2" stroke="#b8b8b8" stroke-width="0.9"/><path d="M583.3 450.8 L590.3 450.8 L597.3 457.8 L597.3 482.8 L590.3 489.8 L583.3 489.8 L576.3 482.8 L576.3 457.8Z" fill="url(#hatchG)" stroke="#b4eeb4" stroke-width="1"/><ellipse cx="586.8" cy="470.3" rx="8.5" ry="13.5" fill="none" stroke="#8ee08e" stroke-width="0.8"/><circle cx="586.8" cy="470.3" r="5.8" fill="#000"/><circle cx="586.8" cy="470.8" r="3.6" fill="#c02838"/><path d="M583.8 472.8 l6 -6" stroke="#f0a0b0" stroke-width="1.2"/><path d="M608.0 358.1 v17.2 M634.0 358.1 v17.2" stroke="#b8b8b8" stroke-width="0.9"/><path d="M617.5 347.2 L624.5 347.2 L631.5 354.2 L631.5 379.2 L624.5 386.2 L617.5 386.2 L610.5 379.2 L610.5 354.2Z" fill="url(#hatchG)" stroke="#b4eeb4" stroke-width="1"/><ellipse cx="621.0" cy="366.7" rx="8.5" ry="13.5" fill="none" stroke="#8ee08e" stroke-width="0.8"/><circle cx="621.0" cy="366.7" r="5.8" fill="#000"/><circle cx="621.0" cy="367.2" r="3.6" fill="#c02838"/><path d="M618.0 369.2 l6 -6" stroke="#f0a0b0" stroke-width="1.2"/><path d="M608.0 461.7 v17.2 M634.0 461.7 v17.2" stroke="#b8b8b8" stroke-width="0.9"/><path d="M617.5 450.8 L624.5 450.8 L631.5 457.8 L631.5 482.8 L624.5 489.8 L617.5 489.8 L610.5 482.8 L610.5 457.8Z" fill="url(#hatchG)" stroke="#b4eeb4" stroke-width="1"/><ellipse cx="621.0" cy="470.3" rx="8.5" ry="13.5" fill="none" stroke="#8ee08e" stroke-width="0.8"/><circle cx="621.0" cy="470.3" r="5.8" fill="#000"/><circle cx="621.0" cy="470.8" r="3.6" fill="#c02838"/><path d="M618.0 472.8 l6 -6" stroke="#f0a0b0" stroke-width="1.2"/><path d="M642.5 358.1 v17.2 M668.5 358.1 v17.2" stroke="#b8b8b8" stroke-width="0.9"/><path d="M652.0 347.2 L659.0 347.2 L666.0 354.2 L666.0 379.2 L659.0 386.2 L652.0 386.2 L645.0 379.2 L645.0 354.2Z" fill="url(#hatchG)" stroke="#b4eeb4" stroke-width="1"/><ellipse cx="655.5" cy="366.7" rx="8.5" ry="13.5" fill="none" stroke="#8ee08e" stroke-width="0.8"/><circle cx="655.5" cy="366.7" r="5.8" fill="#000"/><circle cx="655.5" cy="367.2" r="3.6" fill="#c02838"/><path d="M652.5 369.2 l6 -6" stroke="#f0a0b0" stroke-width="1.2"/><path d="M642.5 461.7 v17.2 M668.5 461.7 v17.2" stroke="#b8b8b8" stroke-width="0.9"/><path d="M652.0 450.8 L659.0 450.8 L666.0 457.8 L666.0 482.8 L659.0 489.8 L652.0 489.8 L645.0 482.8 L645.0 457.8Z" fill="url(#hatchG)" stroke="#b4eeb4" stroke-width="1"/><ellipse cx="655.5" cy="470.3" rx="8.5" ry="13.5" fill="none" stroke="#8ee08e" stroke-width="0.8"/><circle cx="655.5" cy="470.3" r="5.8" fill="#000"/><circle cx="655.5" cy="470.8" r="3.6" fill="#c02838"/><path d="M652.5 472.8 l6 -6" stroke="#f0a0b0" stroke-width="1.2"/><path d="M712.0 358.6 v16.3 M737.0 358.6 v16.3" stroke="#b8b8b8" stroke-width="0.9"/><path d="M721.5 348.2 L727.5 348.2 L734.5 355.2 L734.5 378.2 L727.5 385.2 L721.5 385.2 L714.5 378.2 L714.5 355.2Z" fill="url(#hatchG)" stroke="#b4eeb4" stroke-width="1"/><ellipse cx="724.5" cy="366.7" rx="8.0" ry="12.5" fill="none" stroke="#8ee08e" stroke-width="0.8"/><circle cx="724.5" cy="366.7" r="5.8" fill="#000"/><path d="M720.5 370.7 l8 -8 M721.5 363.7 l6 6" stroke="#d8c8e8" stroke-width="0.9"/><path d="M711.5 461.7 v17.2 M737.5 461.7 v17.2" stroke="#b8b8b8" stroke-width="0.9"/><path d="M721.0 450.8 L728.0 450.8 L735.0 457.8 L735.0 482.8 L728.0 489.8 L721.0 489.8 L714.0 482.8 L714.0 457.8Z" fill="url(#hatchG)" stroke="#b4eeb4" stroke-width="1"/><ellipse cx="724.5" cy="470.3" rx="8.5" ry="13.5" fill="none" stroke="#8ee08e" stroke-width="0.8"/><circle cx="724.5" cy="470.3" r="5.8" fill="#000"/><circle cx="724.5" cy="470.8" r="3.6" fill="#c02838"/><path d="M721.5 472.8 l6 -6" stroke="#f0a0b0" stroke-width="1.2"/><path d="M746.7 358.6 v16.3 M771.7 358.6 v16.3" stroke="#b8b8b8" stroke-width="0.9"/><path d="M756.2 348.2 L762.2 348.2 L769.2 355.2 L769.2 378.2 L762.2 385.2 L756.2 385.2 L749.2 378.2 L749.2 355.2Z" fill="url(#hatchG)" stroke="#b4eeb4" stroke-width="1"/><ellipse cx="759.2" cy="366.7" rx="8.0" ry="12.5" fill="none" stroke="#8ee08e" stroke-width="0.8"/><circle cx="759.2" cy="366.7" r="5.8" fill="#000"/><path d="M755.2 370.7 l8 -8 M756.2 363.7 l6 6" stroke="#d8c8e8" stroke-width="0.9"/><path d="M746.2 461.7 v17.2 M772.2 461.7 v17.2" stroke="#b8b8b8" stroke-width="0.9"/><path d="M755.7 450.8 L762.7 450.8 L769.7 457.8 L769.7 482.8 L762.7 489.8 L755.7 489.8 L748.7 482.8 L748.7 457.8Z" fill="url(#hatchG)" stroke="#b4eeb4" stroke-width="1"/><ellipse cx="759.2" cy="470.3" rx="8.5" ry="13.5" fill="none" stroke="#8ee08e" stroke-width="0.8"/><circle cx="759.2" cy="470.3" r="5.8" fill="#000"/><path d="M755.2 474.3 l8 -8 M756.2 467.3 l6 6" stroke="#d8c8e8" stroke-width="0.9"/><path d="M780.1 358.6 v16.3 M805.1 358.6 v16.3" stroke="#b8b8b8" stroke-width="0.9"/><path d="M789.6 348.2 L795.6 348.2 L802.6 355.2 L802.6 378.2 L795.6 385.2 L789.6 385.2 L782.6 378.2 L782.6 355.2Z" fill="url(#hatchG)" stroke="#b4eeb4" stroke-width="1"/><ellipse cx="792.6" cy="366.7" rx="8.0" ry="12.5" fill="none" stroke="#8ee08e" stroke-width="0.8"/><circle cx="792.6" cy="366.7" r="5.8" fill="#000"/><path d="M788.6 370.7 l8 -8 M789.6 363.7 l6 6" stroke="#d8c8e8" stroke-width="0.9"/><path d="M779.6 461.7 v17.2 M805.6 461.7 v17.2" stroke="#b8b8b8" stroke-width="0.9"/><path d="M789.1 450.8 L796.1 450.8 L803.1 457.8 L803.1 482.8 L796.1 489.8 L789.1 489.8 L782.1 482.8 L782.1 457.8Z" fill="url(#hatchG)" stroke="#b4eeb4" stroke-width="1"/><ellipse cx="792.6" cy="470.3" rx="8.5" ry="13.5" fill="none" stroke="#8ee08e" stroke-width="0.8"/><circle cx="792.6" cy="470.3" r="5.8" fill="#000"/><circle cx="792.6" cy="470.8" r="3.6" fill="#c02838"/><path d="M789.6 472.8 l6 -6" stroke="#f0a0b0" stroke-width="1.2"/><path d="M815.4 358.6 v16.3 M840.4 358.6 v16.3" stroke="#b8b8b8" stroke-width="0.9"/><path d="M824.9 348.2 L830.9 348.2 L837.9 355.2 L837.9 378.2 L830.9 385.2 L824.9 385.2 L817.9 378.2 L817.9 355.2Z" fill="url(#hatchG)" stroke="#b4eeb4" stroke-width="1"/><ellipse cx="827.9" cy="366.7" rx="8.0" ry="12.5" fill="none" stroke="#8ee08e" stroke-width="0.8"/><circle cx="827.9" cy="366.7" r="5.8" fill="#000"/><circle cx="827.9" cy="367.2" r="3.6" fill="#c02838"/><path d="M824.9 369.2 l6 -6" stroke="#f0a0b0" stroke-width="1.2"/><path d="M814.9 461.7 v17.2 M840.9 461.7 v17.2" stroke="#b8b8b8" stroke-width="0.9"/><path d="M824.4 450.8 L831.4 450.8 L838.4 457.8 L838.4 482.8 L831.4 489.8 L824.4 489.8 L817.4 482.8 L817.4 457.8Z" fill="url(#hatchG)" stroke="#b4eeb4" stroke-width="1"/><ellipse cx="827.9" cy="470.3" rx="8.5" ry="13.5" fill="none" stroke="#8ee08e" stroke-width="0.8"/><circle cx="827.9" cy="470.3" r="5.8" fill="#000"/><path d="M823.9 474.3 l8 -8 M824.9 467.3 l6 6" stroke="#d8c8e8" stroke-width="0.9"/><path d="M849.6 358.6 v16.3 M874.6 358.6 v16.3" stroke="#b8b8b8" stroke-width="0.9"/><path d="M859.1 348.2 L865.1 348.2 L872.1 355.2 L872.1 378.2 L865.1 385.2 L859.1 385.2 L852.1 378.2 L852.1 355.2Z" fill="url(#hatchG)" stroke="#b4eeb4" stroke-width="1"/><ellipse cx="862.1" cy="366.7" rx="8.0" ry="12.5" fill="none" stroke="#8ee08e" stroke-width="0.8"/><circle cx="862.1" cy="366.7" r="5.8" fill="#000"/><circle cx="862.1" cy="367.2" r="3.6" fill="#c02838"/><path d="M859.1 369.2 l6 -6" stroke="#f0a0b0" stroke-width="1.2"/><path d="M849.1 461.7 v17.2 M875.1 461.7 v17.2" stroke="#b8b8b8" stroke-width="0.9"/><path d="M858.6 450.8 L865.6 450.8 L872.6 457.8 L872.6 482.8 L865.6 489.8 L858.6 489.8 L851.6 482.8 L851.6 457.8Z" fill="url(#hatchG)" stroke="#b4eeb4" stroke-width="1"/><ellipse cx="862.1" cy="470.3" rx="8.5" ry="13.5" fill="none" stroke="#8ee08e" stroke-width="0.8"/><circle cx="862.1" cy="470.3" r="5.8" fill="#000"/><circle cx="862.1" cy="470.8" r="3.6" fill="#c02838"/><path d="M859.1 472.8 l6 -6" stroke="#f0a0b0" stroke-width="1.2"/><path d="M884.3 358.6 v16.3 M909.3 358.6 v16.3" stroke="#b8b8b8" stroke-width="0.9"/><path d="M893.8 348.2 L899.8 348.2 L906.8 355.2 L906.8 378.2 L899.8 385.2 L893.8 385.2 L886.8 378.2 L886.8 355.2Z" fill="url(#hatchG)" stroke="#b4eeb4" stroke-width="1"/><ellipse cx="896.8" cy="366.7" rx="8.0" ry="12.5" fill="none" stroke="#8ee08e" stroke-width="0.8"/><circle cx="896.8" cy="366.7" r="5.8" fill="#000"/><circle cx="896.8" cy="367.2" r="3.6" fill="#c02838"/><path d="M893.8 369.2 l6 -6" stroke="#f0a0b0" stroke-width="1.2"/><path d="M883.8 461.7 v17.2 M909.8 461.7 v17.2" stroke="#b8b8b8" stroke-width="0.9"/><path d="M893.3 450.8 L900.3 450.8 L907.3 457.8 L907.3 482.8 L900.3 489.8 L893.3 489.8 L886.3 482.8 L886.3 457.8Z" fill="url(#hatchG)" stroke="#b4eeb4" stroke-width="1"/><ellipse cx="896.8" cy="470.3" rx="8.5" ry="13.5" fill="none" stroke="#8ee08e" stroke-width="0.8"/><circle cx="896.8" cy="470.3" r="5.8" fill="#000"/><circle cx="896.8" cy="470.8" r="3.6" fill="#c02838"/><path d="M893.8 472.8 l6 -6" stroke="#f0a0b0" stroke-width="1.2"/><path d="M918.5 358.6 v16.3 M943.5 358.6 v16.3" stroke="#b8b8b8" stroke-width="0.9"/><path d="M928.0 348.2 L934.0 348.2 L941.0 355.2 L941.0 378.2 L934.0 385.2 L928.0 385.2 L921.0 378.2 L921.0 355.2Z" fill="url(#hatchG)" stroke="#b4eeb4" stroke-width="1"/><ellipse cx="931.0" cy="366.7" rx="8.0" ry="12.5" fill="none" stroke="#8ee08e" stroke-width="0.8"/><circle cx="931.0" cy="366.7" r="5.8" fill="#000"/><circle cx="931.0" cy="367.2" r="3.6" fill="#c02838"/><path d="M928.0 369.2 l6 -6" stroke="#f0a0b0" stroke-width="1.2"/><path d="M918.0 461.7 v17.2 M944.0 461.7 v17.2" stroke="#b8b8b8" stroke-width="0.9"/><path d="M927.5 450.8 L934.5 450.8 L941.5 457.8 L941.5 482.8 L934.5 489.8 L927.5 489.8 L920.5 482.8 L920.5 457.8Z" fill="url(#hatchG)" stroke="#b4eeb4" stroke-width="1"/><ellipse cx="931.0" cy="470.3" rx="8.5" ry="13.5" fill="none" stroke="#8ee08e" stroke-width="0.8"/><circle cx="931.0" cy="470.3" r="5.8" fill="#000"/><circle cx="931.0" cy="470.8" r="3.6" fill="#c02838"/><path d="M928.0 472.8 l6 -6" stroke="#f0a0b0" stroke-width="1.2"/><path d="M952.5 358.6 v16.3 M977.5 358.6 v16.3" stroke="#b8b8b8" stroke-width="0.9"/><path d="M962.0 348.2 L968.0 348.2 L975.0 355.2 L975.0 378.2 L968.0 385.2 L962.0 385.2 L955.0 378.2 L955.0 355.2Z" fill="url(#hatchG)" stroke="#b4eeb4" stroke-width="1"/><ellipse cx="965.0" cy="366.7" rx="8.0" ry="12.5" fill="none" stroke="#8ee08e" stroke-width="0.8"/><circle cx="965.0" cy="366.7" r="5.8" fill="#000"/><circle cx="965.0" cy="367.2" r="3.6" fill="#c02838"/><path d="M962.0 369.2 l6 -6" stroke="#f0a0b0" stroke-width="1.2"/><path d="M952.0 461.7 v17.2 M978.0 461.7 v17.2" stroke="#b8b8b8" stroke-width="0.9"/><path d="M961.5 450.8 L968.5 450.8 L975.5 457.8 L975.5 482.8 L968.5 489.8 L961.5 489.8 L954.5 482.8 L954.5 457.8Z" fill="url(#hatchG)" stroke="#b4eeb4" stroke-width="1"/><ellipse cx="965.0" cy="470.3" rx="8.5" ry="13.5" fill="none" stroke="#8ee08e" stroke-width="0.8"/><circle cx="965.0" cy="470.3" r="5.8" fill="#000"/><path d="M961.0 474.3 l8 -8 M962.0 467.3 l6 6" stroke="#d8c8e8" stroke-width="0.9"/><path d="M813.2 306.3 v18.0 M841.8 306.3 v18.0" stroke="#b8b8b8" stroke-width="0.9"/><rect x="815.8" y="294.8" width="23.5" height="41.0" rx="9.5" fill="url(#hatchG)" stroke="#b4eeb4" stroke-width="1"/><ellipse cx="827.5" cy="315.3" rx="9.8" ry="14.5" fill="none" stroke="#8ee08e" stroke-width="0.8"/><circle cx="827.5" cy="315.3" r="6.6" fill="#000"/><rect x="824.2" y="312.1" width="6.5" height="6.5" fill="#b83848"/><rect x="824.2" y="312.1" width="6.5" height="4.0" fill="#e0b8c8"/><path d="M848.0 306.3 v18.0 M876.5 306.3 v18.0" stroke="#b8b8b8" stroke-width="0.9"/><rect x="850.5" y="294.8" width="23.5" height="41.0" rx="9.5" fill="url(#hatchG)" stroke="#b4eeb4" stroke-width="1"/><ellipse cx="862.3" cy="315.3" rx="9.8" ry="14.5" fill="none" stroke="#8ee08e" stroke-width="0.8"/><circle cx="862.3" cy="315.3" r="6.6" fill="#000"/><rect x="859.0" y="312.1" width="6.5" height="6.5" fill="#b83848"/><rect x="859.0" y="312.1" width="6.5" height="4.0" fill="#e0b8c8"/><path d="M883.0 306.3 v18.0 M911.5 306.3 v18.0" stroke="#b8b8b8" stroke-width="0.9"/><rect x="885.5" y="294.8" width="23.5" height="41.0" rx="9.5" fill="url(#hatchG)" stroke="#b4eeb4" stroke-width="1"/><ellipse cx="897.2" cy="315.3" rx="9.8" ry="14.5" fill="none" stroke="#8ee08e" stroke-width="0.8"/><circle cx="897.2" cy="315.3" r="6.6" fill="#000"/><rect x="894.0" y="312.1" width="6.5" height="6.5" fill="#b83848"/><rect x="894.0" y="312.1" width="6.5" height="4.0" fill="#e0b8c8"/><path d="M917.0 306.3 v18.0 M945.5 306.3 v18.0" stroke="#b8b8b8" stroke-width="0.9"/><rect x="919.5" y="294.8" width="23.5" height="41.0" rx="9.5" fill="url(#hatchG)" stroke="#b4eeb4" stroke-width="1"/><ellipse cx="931.2" cy="315.3" rx="9.8" ry="14.5" fill="none" stroke="#8ee08e" stroke-width="0.8"/><circle cx="931.2" cy="315.3" r="6.6" fill="#000"/><rect x="928.0" y="312.1" width="6.5" height="6.5" fill="#b83848"/><rect x="928.0" y="312.1" width="6.5" height="4.0" fill="#e0b8c8"/><path d="M589.2 651.1 v18.9 M617.2 651.1 v18.9" stroke="#b8b8b8" stroke-width="0.9"/><rect x="591.7" y="639.1" width="23.0" height="43.0" rx="9.5" fill="url(#hatchG)" stroke="#b4eeb4" stroke-width="1"/><ellipse cx="603.2" cy="660.6" rx="9.5" ry="15.5" fill="none" stroke="#8ee08e" stroke-width="0.8"/><circle cx="603.2" cy="660.6" r="6.6" fill="#000"/><rect x="600.0" y="657.4" width="6.5" height="6.5" fill="#b83848"/><rect x="600.0" y="657.4" width="6.5" height="4.0" fill="#e0b8c8"/><path d="M623.5 651.1 v18.9 M651.5 651.1 v18.9" stroke="#b8b8b8" stroke-width="0.9"/><rect x="626.0" y="639.1" width="23.0" height="43.0" rx="9.5" fill="url(#hatchG)" stroke="#b4eeb4" stroke-width="1"/><ellipse cx="637.5" cy="660.6" rx="9.5" ry="15.5" fill="none" stroke="#8ee08e" stroke-width="0.8"/><circle cx="637.5" cy="660.6" r="6.6" fill="#000"/><rect x="634.2" y="657.4" width="6.5" height="6.5" fill="#b83848"/><rect x="634.2" y="657.4" width="6.5" height="4.0" fill="#e0b8c8"/><path d="M656.8 651.1 v18.9 M684.8 651.1 v18.9" stroke="#b8b8b8" stroke-width="0.9"/><rect x="659.3" y="639.1" width="23.0" height="43.0" rx="9.5" fill="url(#hatchG)" stroke="#b4eeb4" stroke-width="1"/><ellipse cx="670.8" cy="660.6" rx="9.5" ry="15.5" fill="none" stroke="#8ee08e" stroke-width="0.8"/><circle cx="670.8" cy="660.6" r="6.6" fill="#000"/><rect x="667.5" y="657.4" width="6.5" height="6.5" fill="#b83848"/><rect x="667.5" y="657.4" width="6.5" height="4.0" fill="#e0b8c8"/><path d="M693.0 651.1 v18.9 M721.0 651.1 v18.9" stroke="#b8b8b8" stroke-width="0.9"/><rect x="695.5" y="639.1" width="23.0" height="43.0" rx="9.5" fill="url(#hatchG)" stroke="#b4eeb4" stroke-width="1"/><ellipse cx="707.0" cy="660.6" rx="9.5" ry="15.5" fill="none" stroke="#8ee08e" stroke-width="0.8"/><circle cx="707.0" cy="660.6" r="6.6" fill="#000"/><rect x="703.8" y="657.4" width="6.5" height="6.5" fill="#b83848"/><rect x="703.8" y="657.4" width="6.5" height="4.0" fill="#e0b8c8"/><text x="0" y="0" font-size="21.61" fill="#a9a9a9" stroke="#a9a9a9" stroke-width="0.35" transform="translate(398.30 205.98) scale(1.0112 1)">SV1</text><text x="0" y="0" font-size="22.09" fill="#a9a9a9" stroke="#a9a9a9" stroke-width="0.35" transform="translate(616.50 206.20) scale(0.8548 1)">7</text><text x="0" y="0" font-size="22.88" fill="#a9a9a9" stroke="#a9a9a9" stroke-width="0.35" transform="translate(811.30 291.87) scale(0.9550 1)">SV2</text><text x="0" y="0" font-size="23.11" fill="#a9a9a9" stroke="#a9a9a9" stroke-width="0.35" transform="translate(796.50 323.40) scale(0.6926 1)">1</text><text x="0" y="0" font-size="22.67" fill="#a9a9a9" stroke="#a9a9a9" stroke-width="0.35" transform="translate(952.60 323.40) scale(0.8249 1)">4</text><text x="0" y="0" font-size="23.73" fill="#a9a9a9" stroke="#a9a9a9" stroke-width="0.35" transform="translate(586.50 638.26) scale(0.9164 1)">SV4</text><text x="0" y="0" font-size="25.44" fill="#a9a9a9" stroke="#a9a9a9" stroke-width="0.35" transform="translate(570.30 669.50) scale(0.8556 1)">1</text><text x="0" y="0" font-size="24.27" fill="#a9a9a9" stroke="#a9a9a9" stroke-width="0.35" transform="translate(726.40 668.90) scale(0.8299 1)">4</text><text x="0" y="0" font-size="23.26" fill="#a9a9a9" stroke="#a9a9a9" stroke-width="0.35" transform="translate(416.90 553.80) scale(0.9556 1)">R1</text><text x="0" y="0" font-size="22.60" fill="#a9a9a9" stroke="#a9a9a9" stroke-width="0.35" transform="translate(526.40 618.77) scale(0.9916 1)">R10</text><text x="0" y="0" font-size="22.64" fill="#a9a9a9" stroke="#a9a9a9" stroke-width="0.35" transform="translate(754.30 589.00) scale(0.9635 1)">R12</text><text x="0" y="0" font-size="27.19" fill="#a9a9a9" stroke="#a9a9a9" stroke-width="0.35" transform="translate(734.80 942.62) scale(0.8060 1)">U$1</text><text x="0" y="0" font-size="23.26" fill="#a9a9a9" stroke="#a9a9a9" stroke-width="0.35" transform="translate(781.80 924.40) scale(0.7579 1)">1</text><text x="0" y="0" font-size="23.64" fill="#a9a9a9" stroke="#a9a9a9" stroke-width="0.35" transform="translate(397.10 313.60) rotate(-90) scale(0.9003 1)">R2</text><g opacity="0.55"><text x="0" y="0" font-size="23.31" fill="#a9a9a9" transform="translate(431.17 313.60) rotate(-90) scale(0.9132 1)">R3</text></g><g opacity="0.55"><text x="0" y="0" font-size="23.98" fill="#a9a9a9" transform="translate(465.70 313.60) rotate(-90) scale(0.8874 1)">R4</text></g><g opacity="0.55"><text x="0" y="0" font-size="23.64" fill="#a9a9a9" transform="translate(499.76 313.60) rotate(-90) scale(0.9003 1)">R5</text></g><g opacity="0.55"><text x="0" y="0" font-size="23.31" fill="#a9a9a9" transform="translate(534.07 313.60) rotate(-90) scale(0.9132 1)">R6</text></g><g opacity="0.55"><text x="0" y="0" font-size="23.98" fill="#a9a9a9" transform="translate(568.60 313.60) rotate(-90) scale(0.8874 1)">R7</text></g><g opacity="0.55"><text x="0" y="0" font-size="23.31" fill="#a9a9a9" transform="translate(602.67 313.60) rotate(-90) scale(0.9132 1)">R8</text></g><text x="0" y="0" font-size="23.73" fill="#a9a9a9" stroke="#a9a9a9" stroke-width="0.35" transform="translate(620.26 549.00) rotate(-90) scale(0.9035 1)">R9</text><text x="0" y="0" font-size="22.46" fill="#a9a9a9" stroke="#a9a9a9" stroke-width="0.35" transform="translate(545.28 859.00) rotate(-90) scale(0.9970 1)">CSM-7X-DU</text><text x="0" y="0" font-size="25.03" fill="#d8b0b0" stroke="#d8b0b0" stroke-width="0.35" transform="translate(453.47 860.90) rotate(-90) scale(0.8955 1)">Q1</text><text x="0" y="0" font-size="21" fill="#a9a9a9" stroke="#a9a9a9" stroke-width="0.35" transform="translate(745 733) rotate(45)">R11</text><text x="527" y="726" font-size="16" fill="#e0e0e0">*</text><path d="M520.4 417.8 h30.0 M535.4 402.8 v30.0" stroke="#d0d0d0" stroke-width="1"/><path d="M830.4 418.0 h30.0 M845.4 403.0 v30.0" stroke="#d0d0d0" stroke-width="1"/><path d="M475.2 759.4 h26.0 M488.2 746.4 v26.0" stroke="#d0d0d0" stroke-width="1"/><path d="M597.8 768.6 h26.0 M610.8 755.6 v26.0" stroke="#d0d0d0" stroke-width="1"/><path d="M714.0 872.0 h26.0 M727.0 859.0 v26.0" stroke="#d0d0d0" stroke-width="1"/><path d="M508 229 h20 M518 219 v20" stroke="#f0f0f0" stroke-width="1"/><path d="M869 315.3 h20 M879.4 305 v20" stroke="#e0e0e0" stroke-width="1"/><path d="M752 607 h36 M770 589 v36" stroke="#d8c040" stroke-width="0.8"/><text x="0" y="0" font-size="20.35" fill="#a9a9a9" transform="translate(411.00 265.00) scale(0.5303 1)">1</text><path d="M339 942.5 h18 M348.5 933 v18" stroke="#fff" stroke-width="1.4" stroke-dasharray="1.4 1.4"/></g></svg>
<!-- scrollbar -->
<div class="a" style="left:64px;top:997px;width:1123px;height:1px;background:#fafafa"></div>
<div class="a" style="left:64px;top:998px;width:1123px;height:16px;background:#cdcdcd"></div>
<div class="a" style="left:64px;top:998px;width:84px;height:16px;background:#f0f0f0"></div>
<div class="a" style="left:0;top:1014px;width:1187px;height:1px;background:#9a9a9a"></div><div class="a" style="left:0;top:1013px;width:63px;height:2px;background:#858585"></div>
<div class="a" style="left:0;top:1015px;width:1187px;height:24px;background:#e5e5e5"></div>
<div class="t" style="left:4px;top:1021px;font-size:11px;color:#333">Left-click to select object to delete</div>
<svg width="1187" height="1039" style="position:absolute;left:0;top:0" font-family='"Liberation Sans", sans-serif'><path d="M6.5 49 V67 M10.5 49 V67" stroke="#9c9c9c" stroke-width="1"/><path d="M6.5 78 V96 M10.5 78 V96" stroke="#9c9c9c" stroke-width="1"/><path d="M105.0 49 V67" stroke="#9c9c9c" stroke-width="1"/><path d="M136.0 49 V67" stroke="#9c9c9c" stroke-width="1"/><path d="M199.0 49 V67" stroke="#9c9c9c" stroke-width="1"/><path d="M231.0 49 V67" stroke="#9c9c9c" stroke-width="1"/><path d="M294.5 49 V67" stroke="#9c9c9c" stroke-width="1"/><path d="M481.0 49 V67" stroke="#9c9c9c" stroke-width="1"/><path d="M544.5 49 V67" stroke="#9c9c9c" stroke-width="1"/><path d="M608.0 49 V67" stroke="#9c9c9c" stroke-width="1"/><path d="M646.0 49 V67" stroke="#9c9c9c" stroke-width="1"/><path d="M650.0 49 V67" stroke="#9c9c9c" stroke-width="1"/><path d="M21 51 h9 l3 3 v12 h-12 z" fill="#e6e6e6" stroke="#555" stroke-width="1.6"/><path d="M24 57 h6 M28 54.5 l3 2.5 l-3 2.5" stroke="#333" stroke-width="2" fill="none"/><path d="M30.5 62.0 h8.0 l-4.0 4.0 z" fill="#000"/><path d="M49.5 50.5 h13 l2.5 2.5 v13 h-15.5 z" fill="#3d3d3d"/><rect x="52" y="52" width="10" height="5" fill="#e6e6e6"/><rect x="53" y="61" width="9" height="4" fill="#999"/><rect x="84" y="50" width="8" height="5" fill="#888"/><rect x="80" y="55" width="16" height="7" rx="2" fill="#3a3a3a"/><rect x="84" y="62" width="8" height="3" fill="#3a3a3a"/><rect x="112" y="50" width="16" height="8" fill="#d42a2a"/><rect x="112" y="58" width="16" height="8" fill="#999"/><text x="120" y="57" font-size="7" font-weight="bold" fill="#fff" text-anchor="middle">SCH</text><text x="120" y="65" font-size="7" font-weight="bold" fill="#eee" text-anchor="middle">BRD</text><rect x="147" y="51" width="13" height="12" rx="2" fill="#555"/><rect x="144" y="54" width="13" height="12" rx="2" fill="#333"/><circle cx="150.5" cy="60" r="3.5" fill="#3aa8e0"/><path d="M175 66 V56 l5 3 v-3 l5 3 v-3 l5 3 V66 z" fill="#333"/><rect x="176" y="51" width="2" height="6" fill="#333"/><rect x="207" y="51" width="4.5" height="15" rx="1" fill="#333"/><rect x="208.5" y="54" width="1.5" height="4" fill="#ccc"/><rect x="213" y="51" width="4.5" height="15" rx="1" fill="#333"/><rect x="214.5" y="54" width="1.5" height="4" fill="#ccc"/><rect x="219" y="51" width="4.5" height="15" rx="1" fill="#333"/><rect x="220.5" y="54" width="1.5" height="4" fill="#ccc"/><rect x="239" y="50" width="17" height="16" fill="#3a7cc8"/><text x="247.5" y="62" font-size="8" fill="#fff" text-anchor="middle">SCR</text><path d="M252.0 62.0 h9.0 l-4.5 4.5 z" fill="#000"/><rect x="270" y="50" width="16" height="16" fill="#f09a28"/><text x="278" y="62" font-size="8" fill="#fff" text-anchor="middle">ULP</text><path d="M283.0 62.0 h9.0 l-4.5 4.5 z" fill="#000"/><circle cx="308.5" cy="57.0" r="5.5" fill="none" stroke="#333" stroke-width="2"/><path d="M312.5 61.0 l4.5 4.5" stroke="#333" stroke-width="3" stroke-linecap="round"/><rect x="305" y="55" width="7" height="4" fill="#333"/><circle cx="339.5" cy="57.0" r="5.5" fill="none" stroke="#333" stroke-width="2"/><path d="M343.5 61.0 l4.5 4.5" stroke="#333" stroke-width="3" stroke-linecap="round"/><path d="M336.5 57 h6 M339.5 54 v6" stroke="#333" stroke-width="1.6"/><circle cx="370.5" cy="57.0" r="5.5" fill="none" stroke="#333" stroke-width="2"/><path d="M374.5 61.0 l4.5 4.5" stroke="#333" stroke-width="3" stroke-linecap="round"/><path d="M367.5 57 h6" stroke="#333" stroke-width="1.6"/><circle cx="401.5" cy="57.0" r="5.5" fill="none" stroke="#333" stroke-width="2"/><path d="M405.5 61.0 l4.5 4.5" stroke="#333" stroke-width="3" stroke-linecap="round"/><path d="M398.5 55.5 h6 M398.5 58.5 h6" stroke="#333" stroke-width="1.4"/><circle cx="432.5" cy="57.0" r="5.5" fill="none" stroke="#333" stroke-width="2"/><path d="M436.5 61.0 l4.5 4.5" stroke="#333" stroke-width="3" stroke-linecap="round"/><rect x="429" y="54" width="4" height="3" fill="#555"/><path d="M437.0 62.0 h8.0 l-4.0 4.0 z" fill="#000"/><path d="M459 62 v-5 h9 M466 54 l3 3 l-3 3 M471 55 v5 h-9 M464 63 l-3 -3 l3 -3" stroke="#333" stroke-width="2.2" fill="none"/><path d="M503 64 c0 -6 -4 -9 -10 -8" stroke="#333" stroke-width="3" fill="none"/><path d="M489 57 l6 -5 v9 z" fill="#333"/><path d="M521 64 c0 -6 4 -9 10 -8" stroke="#bdbdbd" stroke-width="3" fill="none"/><path d="M535 57 l-6 -5 v9 z" fill="#bdbdbd"/><circle cx="560" cy="58" r="8" fill="#dd2a3a"/><rect x="555" y="56.5" width="10" height="3" fill="#fff"/><circle cx="591" cy="53" r="3" fill="#c4c4c4"/><circle cx="591" cy="62.5" r="3" fill="#c4c4c4"/><circle cx="624" cy="58" r="8" fill="#333"/><text x="624" y="62.5" font-size="12" font-weight="bold" fill="#fff" text-anchor="middle">?</text><rect x="655.5" y="47.5" width="54" height="22" rx="2" fill="#e4e4e4" stroke="#6a6a6a" stroke-width="1"/><rect x="717.5" y="47.5" width="54" height="22" rx="2" fill="#e4e4e4" stroke="#6a6a6a" stroke-width="1"/><text x="662" y="58" font-size="10" fill="#c8103a">design</text><text x="682" y="67" font-size="9" fill="#222">link</text><path d="M723 67 v-9 M727 67 v-12 M731 67 v-12 M735 67 v-9" stroke="#c8103a" stroke-width="1.6" fill="none"/><circle cx="723" cy="57" r="2" fill="none" stroke="#c8103a"/><circle cx="735" cy="57" r="2" fill="none" stroke="#c8103a"/><circle cx="729" cy="52" r="2" fill="none" stroke="#c8103a"/><text x="742" y="58" font-size="7" fill="#222">PCB</text><text x="742" y="66" font-size="7" fill="#222">QUOTE</text><rect x="18" y="79" width="14" height="15" fill="#444"/><rect x="19.5" y="80.5" width="3" height="3" fill="#e6e6e6"/><rect x="19.5" y="85.0" width="3" height="3" fill="#e6e6e6"/><rect x="19.5" y="89.5" width="3" height="3" fill="#e6e6e6"/><rect x="23.8" y="80.5" width="3" height="3" fill="#e6e6e6"/><rect x="23.8" y="85.0" width="3" height="3" fill="#e6e6e6"/><rect x="23.8" y="89.5" width="3" height="3" fill="#e6e6e6"/><rect x="28.1" y="80.5" width="3" height="3" fill="#e6e6e6"/><rect x="28.1" y="85.0" width="3" height="3" fill="#e6e6e6"/><rect x="28.1" y="89.5" width="3" height="3" fill="#e6e6e6"/><path d="M28.5 90.0 h8.0 l-4.0 4.0 z" fill="#000"/><path d="M5.5 3.5 h9 a1.5 1.5 0 0 1 1.5 1.5 v11 l-2.5 2.5 h-8 a1.5 1.5 0 0 1 -1.5 -1.5 v-12 a1.5 1.5 0 0 1 1.5 -1.5z" fill="#fff" stroke="#333" stroke-width="1"/><rect x="4" y="6.5" width="12" height="5.5" fill="#3a9a4a"/><text x="10" y="11.4" font-size="5" fill="#cfeccf" text-anchor="middle">BRD</text><path d="M13 108.5 H51 M13 112.5 H51" stroke="#8c8c8c" stroke-width="1"/><path d="M5 172.5 H59" stroke="#9a9a9a" stroke-width="1"/><path d="M5 506.0 H59" stroke="#9a9a9a" stroke-width="1"/><path d="M5 665.0 H59" stroke="#9a9a9a" stroke-width="1"/><circle cx="16" cy="130" r="8" fill="#333"/><rect x="14.5" y="128" width="3" height="7" fill="#fff"/><circle cx="16" cy="125.5" r="1.6" fill="#fff"/><ellipse cx="47" cy="130" rx="8" ry="5" fill="#333"/><circle cx="47" cy="130" r="2.5" fill="#e6e6e6"/><circle cx="47" cy="130" r="1.2" fill="#333"/><rect x="8" y="147" width="8" height="7" fill="#2b6dd0"/><rect x="13" y="151" width="6" height="9" fill="#c42b4a"/><rect x="16" y="158" width="6" height="4" fill="#3b9b5b"/><path d="M18.0 159.0 h9.0 l-4.5 4.5 z" fill="#000"/><path d="M43 148 V163 M40 160 H55" stroke="#999" stroke-width="1.2"/><path d="M46 154 h5 M48.5 151.5 v5" stroke="#333" stroke-width="1.4"/><rect x="9" y="181" width="8" height="8" fill="none" stroke="#333" stroke-width="1.2" stroke-dasharray="1.5 1"/><path d="M17 188 l6 6 l-2.2 .3 l1.8 3 l-1.4 .8 l-1.8 -3 l-1.8 1.5 z" fill="#111"/><path d="M46 181 v14 M39 188 h14" stroke="#444" stroke-width="1"/><path d="M46 180 l-2.5 3 h5z M46 196 l-2.5 -3 h5z M38 188 l3 -2.5 v5z M54 188 l-3 -2.5 v5z" fill="#333"/><path d="M16 204 v18" stroke="#aaa" stroke-width="1.5"/><path d="M14 207 l-6 10 h6z M18 207 l6 10 h-6z" fill="#444"/><path d="M41 213 a6.5 6.5 0 1 0 2 -4.7" fill="none" stroke="#333" stroke-width="1.8"/><path d="M40 206 l1 6 l5 -2z" fill="#333"/><path d="M9.5 231 v16" stroke="#aaa" stroke-width="1.2"/><rect x="12" y="235" width="11" height="3" fill="#333"/><rect x="12" y="241" width="7" height="3" fill="#333"/><path d="M10 258 h7 l3 3 v10 h-10z" fill="#e6e6e6" stroke="#555" stroke-width="1"/><path d="M12 255 h7 l3 3 v10" fill="none" stroke="#555" stroke-width="1"/><rect x="40" y="255" width="10" height="13" fill="#333"/><path d="M45 260 h6 l2 2 v10 h-8z" fill="#e6e6e6" stroke="#555" stroke-width="1"/><rect x="3.5" y="277.5" width="26" height="23" fill="#cce4f7" stroke="#99c9ef" stroke-width="1"/><rect x="10" y="284" width="12" height="13" rx="1" fill="#333"/><rect x="9" y="281" width="14" height="2" fill="#333"/><rect x="13" y="279.5" width="6" height="2" fill="#333"/><path d="M13.5 286 v9 M16 286 v9 M18.5 286 v9" stroke="#ddd" stroke-width="1"/><path d="M40 297 l9 -9" stroke="#111" stroke-width="3" stroke-linecap="round"/><circle cx="50.5" cy="285.5" r="4" fill="#111"/><circle cx="52" cy="283.5" r="2" fill="#e6e6e6"/><rect x="8" y="306" width="10" height="10" fill="#cc2a2a"/><rect x="13" y="311" width="11" height="10" fill="#2d7a3a"/><path d="M18.5 313 v6 M15.5 316 h6" stroke="#fff" stroke-width="1.8"/><path d="M44 306 v16 M38 312 h4 M38 316 h4" stroke="#888" stroke-width="1"/><rect x="44" y="309" width="10" height="9" fill="#333"/><path d="M49 311 v5 M46.5 313.5 h5" stroke="#fff" stroke-width="1.6"/><path d="M49.0 318.0 h8.0 l-4.0 4.0 z" fill="#000"/><path d="M14 333 a6 6 0 0 0 0 12" fill="none" stroke="#333" stroke-width="2"/><path d="M19 333 v13 M20 335 h4 M20 339 h4 M20 343 h4" stroke="#aaa" stroke-width="1.5"/><path d="M40 338 a6 6 0 0 1 11 0" fill="none" stroke="#333" stroke-width="2"/><rect x="40" y="338" width="6" height="7" fill="#333"/><path d="M48.0 341.0 h8.0 l-4.0 4.0 z" fill="#000"/><path d="M12 362 v-4 a4 4 0 0 1 8 0 v4" fill="none" stroke="#333" stroke-width="2.2"/><rect x="10" y="361" width="12" height="10" rx="1.5" fill="#333"/><text x="10" y="388" font-size="7" fill="#444">R2</text><path d="M10 390 h12" stroke="#555"/><text x="10" y="398" font-size="7" fill="#999">10k</text><text x="41" y="388" font-size="7" fill="#999">R2</text><path d="M41 390 h12" stroke="#555"/><text x="41" y="398" font-size="7" fill="#222">10</text><path d="M48.0 394.0 h8.0 l-4.0 4.0 z" fill="#000"/><path d="M10 409 h4 M12 407 v4 M10 418 h4 M12 416 v4" stroke="#333" stroke-width="1.3"/><rect x="14" y="409" width="10" height="9" fill="#b0b0b0"/><path d="M39 405 h15 v4 a10 10 0 0 0 -10 10 h-5z" fill="#aaa"/><path d="M54 407 a10 10 0 0 0 -11 12" fill="none" stroke="#333" stroke-width="1.6"/><path d="M11 446 l3 -12 h10 v12z" fill="#aaa"/><path d="M10.5 446 l3.5 -12 l10 -1" fill="none" stroke="#333" stroke-width="1.8"/><path d="M40 437 h4 M49 437 h5 M44 441 h6 M47 438 v6" stroke="#555" stroke-width="1.3"/><path d="M9 469 v-5 a2.5 2.5 0 0 1 5 0 v5 a2.5 2.5 0 0 0 5 0 v-5 a2.5 2.5 0 0 1 5 0 v5" fill="none" stroke="#333" stroke-width="1.5"/><path d="M39 459 h5 M39 464 h5 M39 469 h5 M49 459 h5 M49 464 h5 M49 469 h5" stroke="#555" stroke-width="1.6"/><path d="M45 456 l3 15" stroke="#888" stroke-width="1.2"/><path d="M10 482 h4 l7 10" fill="none" stroke="#2a6ad0" stroke-width="1.6"/><circle cx="10" cy="482" r="2.5" fill="#3aa24a"/><circle cx="22" cy="494" r="2.5" fill="#3aa24a"/><path d="M40 482 h4 l7 10" fill="none" stroke="#2a6ad0" stroke-width="1.6"/><circle cx="40" cy="482" r="2.5" fill="#3aa24a"/><circle cx="52" cy="494" r="2.5" fill="#3aa24a"/><path d="M46 486 l3 3 M49 486 l-3 3" stroke="#d01040" stroke-width="1.4"/><path d="M8 530 h12" stroke="#111" stroke-width="1.8"/><path d="M19 528 l3 -10" stroke="#999" stroke-width="2.6"/><text x="47" y="530" font-size="15" font-family="Liberation Serif" fill="#111" text-anchor="middle">T</text><circle cx="16" cy="548" r="6.5" fill="none" stroke="#222" stroke-width="1.8"/><path d="M40 550 a7 4 0 0 1 14 0" fill="none" stroke="#222" stroke-width="1.8"/><rect x="10" y="565" width="12" height="15" fill="#333"/><path d="M41 580 v-10 l5 -5 h7 v15z" fill="none" stroke="#333" stroke-width="1.2"/><ellipse cx="16" cy="602" rx="7" ry="3" fill="#3aa24a"/><ellipse cx="16" cy="598" rx="7" ry="3" fill="#777"/><ellipse cx="16" cy="594" rx="7" ry="3" fill="#3aa24a"/><path d="M40 598 h14" stroke="#e0d040" stroke-width="1.4"/><circle cx="40" cy="598" r="2.5" fill="#3aa24a"/><circle cx="53" cy="598" r="2.5" fill="#3aa24a"/><ellipse cx="16" cy="624" rx="7" ry="2.5" fill="#888"/><ellipse cx="16" cy="620" rx="7" ry="3" fill="none" stroke="#888" stroke-width="1.5"/><path d="M40 622 h4 M44 616 v13" stroke="#777" stroke-width="1"/><rect x="45" y="617" width="9" height="9" fill="#222"/><text x="49.5" y="625" font-size="7" fill="#fff" text-anchor="middle">AT</text><path d="M9 643 v10 M23 643 v10" stroke="#aaa" stroke-width="1"/><path d="M11 648 h10" stroke="#222" stroke-width="2"/><path d="M10 648 l3 -3 v6z M22 648 l-3 -3 v6z" fill="#222"/><circle cx="11" cy="677" r="1.9" fill="#333"/><circle cx="18" cy="676" r="1.9" fill="#333"/><circle cx="12" cy="686" r="1.9" fill="#333"/><circle cx="21" cy="684" r="1.9" fill="#333"/><circle cx="16" cy="681" r="1.9" fill="#333"/><circle cx="18" cy="689" r="1.9" fill="#333"/><path d="M40 677 h5 l6 8" fill="none" stroke="#2a6ad0" stroke-width="1.6"/><circle cx="40" cy="677" r="2.5" fill="#3aa24a"/><circle cx="52" cy="686" r="2.5" fill="#3aa24a"/><text x="38" y="690" font-size="7" fill="#333">A</text><rect x="8.5" y="699.5" width="15" height="14" fill="#3a8a4a"/><rect x="10.5" y="701.5" width="11" height="10" fill="none" stroke="#bde0c4" stroke-dasharray="1 1"/><rect x="13" y="704" width="6" height="5" fill="#8ac898"/><text x="8" y="732" font-size="8" fill="#333">ERC</text><path d="M14 735 l3 3 l5 -5" fill="none" stroke="#2e8b3e" stroke-width="2.4"/><text x="39" y="732" font-size="8" fill="#333">DRC</text><path d="M45 735 l3 3 l5 -5" fill="none" stroke="#2e8b3e" stroke-width="2.4"/><path d="M16 749 l8 15 h-16z" fill="#f5c518"/><rect x="15.3" y="753" width="1.6" height="6" fill="#222"/><rect x="15.3" y="760" width="1.6" height="1.6" fill="#222"/><path d="M75 1002 l-4 3.5 l4 3.5" fill="none" stroke="#555" stroke-width="1.6"/></svg>
</body></html>
